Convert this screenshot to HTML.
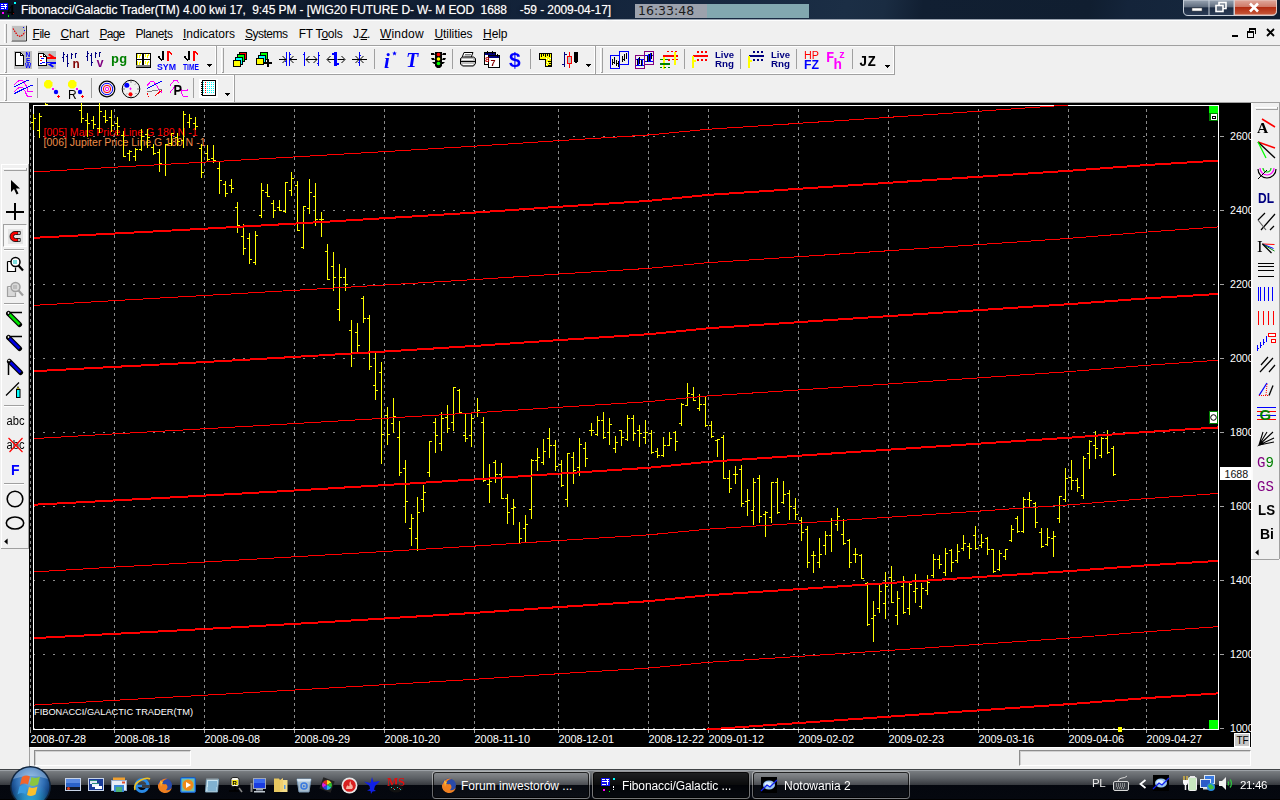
<!DOCTYPE html><html><head><meta charset="utf-8"><title>Fibonacci/Galactic Trader</title><style>
html,body{margin:0;padding:0}
body{width:1280px;height:800px;overflow:hidden;background:#f0f0f0;position:relative;font-family:"Liberation Sans",Arial,sans-serif;font-size:12px;color:#000}
.abs{position:absolute}
svg{position:absolute;overflow:visible}
svg.chart{overflow:hidden}
#title{left:0;top:0;width:1280px;height:19px;background:linear-gradient(100deg,#0b1626 0%,#0e1a2c 18%,#13233a 42%,#172941 58%,#1b2e45 66%,#1a2c42 69%,#111f32 72%,#101e30 85%,#14243a 88%,#15263c 93%,#101d30 100%)}
#titleedge{left:0;top:19px;width:1280px;height:1px;background:#9aa3b0}
#titleedge2{left:0;top:20px;width:1280px;height:1px;background:#fdfdfd}
#ttext{left:21px;top:3px;color:#fff;font-size:12px;letter-spacing:-0.094px;white-space:pre;line-height:15px;text-shadow:0 0 1px rgba(255,255,255,.55),0 0 4px rgba(0,0,0,.9)}
#menubar{left:0;top:21px;width:1280px;height:24px;background:#f0f0f0}
.mi{position:absolute;top:27px;font-size:12px;line-height:15px;white-space:pre}
.mi u{text-decoration:underline}
.hl{position:absolute;height:1px;left:0;width:1280px}
.tbend{position:absolute;width:1px}
.sep{position:absolute;width:1px;background:#a0a0a0}
.grip{position:absolute;width:1px;background:#a0a0a0;border-right:1px solid #fff}
.ic{position:absolute;will-change:transform}
#task{left:0;top:769px;width:1280px;height:31px;background:linear-gradient(180deg,#404346 0,#404346 1px,#9ca1a6 1px,#9ca1a6 2px,#7c8084 2px,#74787c 3px,#5c6065 9px,#36393e 16px,#04070e 16px,#05080f 30px,#000 30px)}
.tbtn{position:absolute;top:771px;height:28px;border:1px solid rgba(255,255,255,.38);border-radius:4px;box-sizing:border-box;box-shadow:inset 0 0 0 1px rgba(0,0,0,.75);background:linear-gradient(180deg,rgba(255,255,255,.16) 0,rgba(255,255,255,.10) 13px,rgba(255,255,255,.02) 13px,rgba(255,255,255,.03) 28px)}
.tbtn.act{background:linear-gradient(180deg,rgba(0,0,0,.72) 0,rgba(0,0,0,.8) 13px,rgba(0,0,0,.5) 13px,rgba(10,12,18,.5) 28px);border-color:rgba(255,255,255,.45)}
.tt{position:absolute;color:#fff;font-size:12px;line-height:15px;white-space:pre;top:779px}
.sunk{position:absolute;box-sizing:border-box;border:1px solid;border-color:#8c8c8c #fff #fff #8c8c8c;background:#f0f0f0;box-shadow:inset 1px 1px 0 #d0d0d0}
</style></head><body>
<div id="title" class="abs"></div><div id="titleedge" class="abs"></div><div id="titleedge2" class="abs"></div>
<div class="abs" style="left:635px;top:4px;width:72px;height:14px;background:#9ca2ad"></div>
<div class="abs" style="left:707px;top:4px;width:102px;height:14px;background:#82a8b0"></div>
<div class="abs" style="left:638px;top:3px;font-family:'DejaVu Sans',sans-serif;font-size:12.5px;line-height:15px;color:#1c1c1c">16:33:48</div>
<div id="ttext" class="abs">Fibonacci/Galactic Trader(TM) 4.00 kwi 17,  9:45 PM - [WIG20 FUTURE D- W- M EOD  1688    -59 - 2009-04-17]</div>
<div id="menubar" class="abs"></div>
<div class="mi" style="left:32.5px;letter-spacing:-0.460px"><u>F</u>ile</div>
<div class="mi" style="left:60.5px;letter-spacing:-0.218px"><u>C</u>hart</div>
<div class="mi" style="left:99.5px;letter-spacing:-0.758px"><u>P</u>age</div>
<div class="mi" style="left:135.5px;letter-spacing:-0.433px">Plane<u>t</u>s</div>
<div class="mi" style="left:183px;letter-spacing:-0.003px"><u>I</u>ndicators</div>
<div class="mi" style="left:245px;letter-spacing:-0.503px"><u>S</u>ystems</div>
<div class="mi" style="left:298.75px;letter-spacing:-0.229px">FT T<u>o</u>ols</div>
<div class="mi" style="left:353px;letter-spacing:-0.875px">J.<u>Z</u>.</div>
<div class="mi" style="left:380px;letter-spacing:0.177px"><u>W</u>indow</div>
<div class="mi" style="left:434.5px;letter-spacing:-0.074px"><u>U</u>tilities</div>
<div class="mi" style="left:483px;letter-spacing:-0.048px"><u>H</u>elp</div>
<div class="hl" style="top:45px;background:#a0a0a0"></div><div class="hl" style="top:46px;background:#fff;width:894px"></div>
<div class="hl" style="top:73px;background:#fff;width:894px"></div><div class="hl" style="top:74px;background:#a0a0a0;width:895px"></div><div class="hl" style="top:75px;background:#fff;width:234px"></div>
<div class="hl" style="top:101px;background:#fff;width:234px"></div><div class="hl" style="top:102px;background:#a0a0a0"></div>
<svg class="chart" width="1222" height="644" viewBox="29 103 1222 644" style="left:29px;top:103px">
<rect x="29" y="103" width="1222" height="644" fill="#000"/>
<g shape-rendering="crispEdges">
<line x1="33" x2="1218" y1="136.5" y2="136.5" stroke="#8a8a8a" stroke-width="1" stroke-dasharray="2 8"/>
<rect x="1220" y="136" width="4" height="1" fill="#a0a0a0"/>
<line x1="33" x2="1218" y1="210.5" y2="210.5" stroke="#8a8a8a" stroke-width="1" stroke-dasharray="2 8"/>
<rect x="1220" y="210" width="4" height="1" fill="#a0a0a0"/>
<line x1="33" x2="1218" y1="284.5" y2="284.5" stroke="#8a8a8a" stroke-width="1" stroke-dasharray="2 8"/>
<rect x="1220" y="284" width="4" height="1" fill="#a0a0a0"/>
<line x1="33" x2="1218" y1="358.5" y2="358.5" stroke="#8a8a8a" stroke-width="1" stroke-dasharray="2 8"/>
<rect x="1220" y="358" width="4" height="1" fill="#a0a0a0"/>
<line x1="33" x2="1218" y1="432.5" y2="432.5" stroke="#8a8a8a" stroke-width="1" stroke-dasharray="2 8"/>
<rect x="1220" y="432" width="4" height="1" fill="#a0a0a0"/>
<line x1="33" x2="1218" y1="506.5" y2="506.5" stroke="#8a8a8a" stroke-width="1" stroke-dasharray="2 8"/>
<rect x="1220" y="506" width="4" height="1" fill="#a0a0a0"/>
<line x1="33" x2="1218" y1="580.5" y2="580.5" stroke="#8a8a8a" stroke-width="1" stroke-dasharray="2 8"/>
<rect x="1220" y="580" width="4" height="1" fill="#a0a0a0"/>
<line x1="33" x2="1218" y1="654.5" y2="654.5" stroke="#8a8a8a" stroke-width="1" stroke-dasharray="2 8"/>
<rect x="1220" y="654" width="4" height="1" fill="#a0a0a0"/>
<rect x="1220" y="728" width="4" height="1" fill="#a0a0a0"/>
<line x1="33" x2="1218" y1="728.5" y2="728.5" stroke="#8a8a8a" stroke-width="1" stroke-dasharray="2 8"/>
<line x1="30.5" x2="30.5" y1="109" y2="730" stroke="#8a8a8a" stroke-width="1" stroke-dasharray="3 3"/>
<rect x="30" y="730" width="1" height="3" fill="#a0a0a0"/>
<line x1="114.5" x2="114.5" y1="109" y2="730" stroke="#8a8a8a" stroke-width="1" stroke-dasharray="3 3"/>
<rect x="114" y="730" width="1" height="3" fill="#a0a0a0"/>
<line x1="204.5" x2="204.5" y1="109" y2="730" stroke="#8a8a8a" stroke-width="1" stroke-dasharray="3 3"/>
<rect x="204" y="730" width="1" height="3" fill="#a0a0a0"/>
<line x1="294.5" x2="294.5" y1="109" y2="730" stroke="#8a8a8a" stroke-width="1" stroke-dasharray="3 3"/>
<rect x="294" y="730" width="1" height="3" fill="#a0a0a0"/>
<line x1="384.5" x2="384.5" y1="109" y2="730" stroke="#8a8a8a" stroke-width="1" stroke-dasharray="3 3"/>
<rect x="384" y="730" width="1" height="3" fill="#a0a0a0"/>
<line x1="474.5" x2="474.5" y1="109" y2="730" stroke="#8a8a8a" stroke-width="1" stroke-dasharray="3 3"/>
<rect x="474" y="730" width="1" height="3" fill="#a0a0a0"/>
<line x1="558.5" x2="558.5" y1="109" y2="730" stroke="#8a8a8a" stroke-width="1" stroke-dasharray="3 3"/>
<rect x="558" y="730" width="1" height="3" fill="#a0a0a0"/>
<line x1="648.5" x2="648.5" y1="109" y2="730" stroke="#8a8a8a" stroke-width="1" stroke-dasharray="3 3"/>
<rect x="648" y="730" width="1" height="3" fill="#a0a0a0"/>
<line x1="708.5" x2="708.5" y1="109" y2="730" stroke="#8a8a8a" stroke-width="1" stroke-dasharray="3 3"/>
<rect x="708" y="730" width="1" height="3" fill="#a0a0a0"/>
<line x1="798.5" x2="798.5" y1="109" y2="730" stroke="#8a8a8a" stroke-width="1" stroke-dasharray="3 3"/>
<rect x="798" y="730" width="1" height="3" fill="#a0a0a0"/>
<line x1="888.5" x2="888.5" y1="109" y2="730" stroke="#8a8a8a" stroke-width="1" stroke-dasharray="3 3"/>
<rect x="888" y="730" width="1" height="3" fill="#a0a0a0"/>
<line x1="978.5" x2="978.5" y1="109" y2="730" stroke="#8a8a8a" stroke-width="1" stroke-dasharray="3 3"/>
<rect x="978" y="730" width="1" height="3" fill="#a0a0a0"/>
<line x1="1068.5" x2="1068.5" y1="109" y2="730" stroke="#8a8a8a" stroke-width="1" stroke-dasharray="3 3"/>
<rect x="1068" y="730" width="1" height="3" fill="#a0a0a0"/>
<line x1="1146.5" x2="1146.5" y1="109" y2="730" stroke="#8a8a8a" stroke-width="1" stroke-dasharray="3 3"/>
<rect x="1146" y="730" width="1" height="3" fill="#a0a0a0"/>
</g>
<g font-family="Liberation Sans, Arial, sans-serif" font-size="11px">
<text x="43.5" y="135.5" fill="#ff0000" textLength="154" lengthAdjust="spacingAndGlyphs">[005] Mars Price Line G 180 N -1</text>
<text x="43.5" y="146" fill="#ee8c48" textLength="162" lengthAdjust="spacingAndGlyphs">[006] Jupiter Price Line G 180 N -1</text>
</g>
<g shape-rendering="crispEdges">
<rect x="33.5" y="105.5" width="1185" height="624" fill="none" stroke="#fff" stroke-width="1"/>
<g fill="#ffff00">
<rect x="33" y="114" width="1" height="16"/>
<rect x="31" y="122" width="2" height="1"/>
<rect x="34" y="118" width="2" height="1"/>
<rect x="39" y="113" width="1" height="25"/>
<rect x="37" y="130" width="2" height="1"/>
<rect x="40" y="116" width="2" height="1"/>
<rect x="45" y="103" width="1" height="2"/>
<rect x="46" y="104" width="2" height="1"/>
<rect x="81" y="103" width="1" height="20"/>
<rect x="79" y="110" width="2" height="1"/>
<rect x="82" y="118" width="2" height="1"/>
<rect x="87" y="113" width="1" height="24"/>
<rect x="85" y="120" width="2" height="1"/>
<rect x="88" y="123" width="2" height="1"/>
<rect x="93" y="116" width="1" height="13"/>
<rect x="91" y="120" width="2" height="1"/>
<rect x="94" y="124" width="2" height="1"/>
<rect x="99" y="103" width="1" height="30"/>
<rect x="97" y="128" width="2" height="1"/>
<rect x="100" y="111" width="2" height="1"/>
<rect x="105" y="110" width="1" height="13"/>
<rect x="103" y="116" width="2" height="1"/>
<rect x="106" y="120" width="2" height="1"/>
<rect x="111" y="110" width="1" height="22"/>
<rect x="109" y="117" width="2" height="1"/>
<rect x="112" y="125" width="2" height="1"/>
<rect x="117" y="117" width="1" height="18"/>
<rect x="115" y="123" width="2" height="1"/>
<rect x="118" y="126" width="2" height="1"/>
<rect x="123" y="131" width="1" height="26"/>
<rect x="121" y="135" width="2" height="1"/>
<rect x="124" y="156" width="2" height="1"/>
<rect x="129" y="150" width="1" height="11"/>
<rect x="127" y="153" width="2" height="1"/>
<rect x="130" y="151" width="2" height="1"/>
<rect x="135" y="148" width="1" height="13"/>
<rect x="133" y="156" width="2" height="1"/>
<rect x="136" y="149" width="2" height="1"/>
<rect x="141" y="129" width="1" height="22"/>
<rect x="139" y="149" width="2" height="1"/>
<rect x="142" y="136" width="2" height="1"/>
<rect x="147" y="129" width="1" height="19"/>
<rect x="145" y="134" width="2" height="1"/>
<rect x="148" y="137" width="2" height="1"/>
<rect x="153" y="144" width="1" height="11"/>
<rect x="151" y="147" width="2" height="1"/>
<rect x="154" y="153" width="2" height="1"/>
<rect x="159" y="149" width="1" height="23"/>
<rect x="157" y="152" width="2" height="1"/>
<rect x="160" y="163" width="2" height="1"/>
<rect x="165" y="144" width="1" height="32"/>
<rect x="163" y="164" width="2" height="1"/>
<rect x="166" y="144" width="2" height="1"/>
<rect x="171" y="133" width="1" height="13"/>
<rect x="169" y="143" width="2" height="1"/>
<rect x="172" y="133" width="2" height="1"/>
<rect x="177" y="133" width="1" height="13"/>
<rect x="175" y="137" width="2" height="1"/>
<rect x="178" y="141" width="2" height="1"/>
<rect x="183" y="111" width="1" height="37"/>
<rect x="181" y="140" width="2" height="1"/>
<rect x="184" y="114" width="2" height="1"/>
<rect x="189" y="114" width="1" height="14"/>
<rect x="187" y="122" width="2" height="1"/>
<rect x="190" y="118" width="2" height="1"/>
<rect x="195" y="117" width="1" height="13"/>
<rect x="193" y="123" width="2" height="1"/>
<rect x="196" y="126" width="2" height="1"/>
<rect x="201" y="144" width="1" height="34"/>
<rect x="199" y="148" width="2" height="1"/>
<rect x="202" y="172" width="2" height="1"/>
<rect x="207" y="145" width="1" height="16"/>
<rect x="205" y="153" width="2" height="1"/>
<rect x="208" y="159" width="2" height="1"/>
<rect x="213" y="145" width="1" height="18"/>
<rect x="211" y="158" width="2" height="1"/>
<rect x="214" y="160" width="2" height="1"/>
<rect x="219" y="162" width="1" height="32"/>
<rect x="217" y="168" width="2" height="1"/>
<rect x="220" y="180" width="2" height="1"/>
<rect x="225" y="181" width="1" height="16"/>
<rect x="223" y="184" width="2" height="1"/>
<rect x="226" y="193" width="2" height="1"/>
<rect x="231" y="179" width="1" height="14"/>
<rect x="229" y="185" width="2" height="1"/>
<rect x="232" y="188" width="2" height="1"/>
<rect x="237" y="202" width="1" height="31"/>
<rect x="235" y="207" width="2" height="1"/>
<rect x="238" y="225" width="2" height="1"/>
<rect x="243" y="224" width="1" height="31"/>
<rect x="241" y="236" width="2" height="1"/>
<rect x="244" y="248" width="2" height="1"/>
<rect x="249" y="233" width="1" height="31"/>
<rect x="247" y="238" width="2" height="1"/>
<rect x="250" y="259" width="2" height="1"/>
<rect x="255" y="231" width="1" height="34"/>
<rect x="253" y="262" width="2" height="1"/>
<rect x="256" y="235" width="2" height="1"/>
<rect x="261" y="183" width="1" height="35"/>
<rect x="259" y="215" width="2" height="1"/>
<rect x="262" y="190" width="2" height="1"/>
<rect x="267" y="184" width="1" height="13"/>
<rect x="265" y="192" width="2" height="1"/>
<rect x="268" y="196" width="2" height="1"/>
<rect x="273" y="200" width="1" height="18"/>
<rect x="271" y="203" width="2" height="1"/>
<rect x="274" y="210" width="2" height="1"/>
<rect x="279" y="200" width="1" height="11"/>
<rect x="277" y="207" width="2" height="1"/>
<rect x="280" y="210" width="2" height="1"/>
<rect x="285" y="182" width="1" height="31"/>
<rect x="283" y="211" width="2" height="1"/>
<rect x="286" y="182" width="2" height="1"/>
<rect x="291" y="172" width="1" height="24"/>
<rect x="289" y="190" width="2" height="1"/>
<rect x="292" y="178" width="2" height="1"/>
<rect x="297" y="181" width="1" height="50"/>
<rect x="295" y="185" width="2" height="1"/>
<rect x="298" y="230" width="2" height="1"/>
<rect x="303" y="206" width="1" height="43"/>
<rect x="301" y="247" width="2" height="1"/>
<rect x="304" y="206" width="2" height="1"/>
<rect x="309" y="179" width="1" height="35"/>
<rect x="307" y="208" width="2" height="1"/>
<rect x="310" y="192" width="2" height="1"/>
<rect x="315" y="183" width="1" height="43"/>
<rect x="313" y="196" width="2" height="1"/>
<rect x="316" y="219" width="2" height="1"/>
<rect x="321" y="212" width="1" height="25"/>
<rect x="319" y="219" width="2" height="1"/>
<rect x="322" y="219" width="2" height="1"/>
<rect x="327" y="244" width="1" height="36"/>
<rect x="325" y="251" width="2" height="1"/>
<rect x="328" y="279" width="2" height="1"/>
<rect x="333" y="252" width="1" height="39"/>
<rect x="331" y="266" width="2" height="1"/>
<rect x="334" y="277" width="2" height="1"/>
<rect x="339" y="264" width="1" height="57"/>
<rect x="337" y="309" width="2" height="1"/>
<rect x="340" y="277" width="2" height="1"/>
<rect x="345" y="268" width="1" height="23"/>
<rect x="343" y="277" width="2" height="1"/>
<rect x="346" y="284" width="2" height="1"/>
<rect x="351" y="320" width="1" height="47"/>
<rect x="349" y="330" width="2" height="1"/>
<rect x="352" y="352" width="2" height="1"/>
<rect x="357" y="323" width="1" height="29"/>
<rect x="355" y="332" width="2" height="1"/>
<rect x="358" y="345" width="2" height="1"/>
<rect x="363" y="296" width="1" height="27"/>
<rect x="361" y="298" width="2" height="1"/>
<rect x="364" y="318" width="2" height="1"/>
<rect x="369" y="315" width="1" height="55"/>
<rect x="367" y="318" width="2" height="1"/>
<rect x="370" y="366" width="2" height="1"/>
<rect x="375" y="353" width="1" height="47"/>
<rect x="373" y="385" width="2" height="1"/>
<rect x="376" y="390" width="2" height="1"/>
<rect x="381" y="362" width="1" height="102"/>
<rect x="379" y="372" width="2" height="1"/>
<rect x="382" y="434" width="2" height="1"/>
<rect x="387" y="407" width="1" height="38"/>
<rect x="385" y="415" width="2" height="1"/>
<rect x="388" y="434" width="2" height="1"/>
<rect x="393" y="398" width="1" height="35"/>
<rect x="391" y="423" width="2" height="1"/>
<rect x="394" y="416" width="2" height="1"/>
<rect x="399" y="421" width="1" height="55"/>
<rect x="397" y="437" width="2" height="1"/>
<rect x="400" y="472" width="2" height="1"/>
<rect x="405" y="460" width="1" height="63"/>
<rect x="403" y="468" width="2" height="1"/>
<rect x="406" y="501" width="2" height="1"/>
<rect x="411" y="514" width="1" height="32"/>
<rect x="409" y="528" width="2" height="1"/>
<rect x="412" y="518" width="2" height="1"/>
<rect x="417" y="497" width="1" height="54"/>
<rect x="415" y="538" width="2" height="1"/>
<rect x="418" y="512" width="2" height="1"/>
<rect x="423" y="485" width="1" height="27"/>
<rect x="421" y="499" width="2" height="1"/>
<rect x="424" y="492" width="2" height="1"/>
<rect x="429" y="441" width="1" height="36"/>
<rect x="427" y="472" width="2" height="1"/>
<rect x="430" y="441" width="2" height="1"/>
<rect x="435" y="418" width="1" height="35"/>
<rect x="433" y="422" width="2" height="1"/>
<rect x="436" y="435" width="2" height="1"/>
<rect x="441" y="412" width="1" height="39"/>
<rect x="439" y="443" width="2" height="1"/>
<rect x="442" y="418" width="2" height="1"/>
<rect x="447" y="405" width="1" height="28"/>
<rect x="445" y="417" width="2" height="1"/>
<rect x="448" y="428" width="2" height="1"/>
<rect x="453" y="387" width="1" height="44"/>
<rect x="451" y="422" width="2" height="1"/>
<rect x="454" y="387" width="2" height="1"/>
<rect x="459" y="389" width="1" height="24"/>
<rect x="457" y="390" width="2" height="1"/>
<rect x="460" y="412" width="2" height="1"/>
<rect x="465" y="414" width="1" height="28"/>
<rect x="463" y="435" width="2" height="1"/>
<rect x="466" y="438" width="2" height="1"/>
<rect x="471" y="413" width="1" height="34"/>
<rect x="469" y="435" width="2" height="1"/>
<rect x="472" y="418" width="2" height="1"/>
<rect x="477" y="398" width="1" height="19"/>
<rect x="475" y="412" width="2" height="1"/>
<rect x="478" y="410" width="2" height="1"/>
<rect x="483" y="417" width="1" height="65"/>
<rect x="481" y="422" width="2" height="1"/>
<rect x="484" y="480" width="2" height="1"/>
<rect x="489" y="464" width="1" height="39"/>
<rect x="487" y="484" width="2" height="1"/>
<rect x="490" y="481" width="2" height="1"/>
<rect x="495" y="460" width="1" height="23"/>
<rect x="493" y="462" width="2" height="1"/>
<rect x="496" y="474" width="2" height="1"/>
<rect x="501" y="463" width="1" height="36"/>
<rect x="499" y="474" width="2" height="1"/>
<rect x="502" y="498" width="2" height="1"/>
<rect x="507" y="494" width="1" height="30"/>
<rect x="505" y="498" width="2" height="1"/>
<rect x="508" y="512" width="2" height="1"/>
<rect x="513" y="499" width="1" height="26"/>
<rect x="511" y="508" width="2" height="1"/>
<rect x="514" y="507" width="2" height="1"/>
<rect x="519" y="522" width="1" height="22"/>
<rect x="517" y="543" width="2" height="1"/>
<rect x="520" y="538" width="2" height="1"/>
<rect x="525" y="515" width="1" height="27"/>
<rect x="523" y="528" width="2" height="1"/>
<rect x="526" y="524" width="2" height="1"/>
<rect x="531" y="459" width="1" height="60"/>
<rect x="529" y="509" width="2" height="1"/>
<rect x="532" y="460" width="2" height="1"/>
<rect x="537" y="448" width="1" height="23"/>
<rect x="535" y="460" width="2" height="1"/>
<rect x="538" y="457" width="2" height="1"/>
<rect x="543" y="439" width="1" height="26"/>
<rect x="541" y="462" width="2" height="1"/>
<rect x="544" y="451" width="2" height="1"/>
<rect x="549" y="428" width="1" height="30"/>
<rect x="547" y="438" width="2" height="1"/>
<rect x="550" y="445" width="2" height="1"/>
<rect x="555" y="440" width="1" height="31"/>
<rect x="553" y="445" width="2" height="1"/>
<rect x="556" y="466" width="2" height="1"/>
<rect x="561" y="460" width="1" height="27"/>
<rect x="559" y="464" width="2" height="1"/>
<rect x="562" y="485" width="2" height="1"/>
<rect x="567" y="453" width="1" height="54"/>
<rect x="565" y="499" width="2" height="1"/>
<rect x="568" y="453" width="2" height="1"/>
<rect x="573" y="452" width="1" height="32"/>
<rect x="571" y="457" width="2" height="1"/>
<rect x="574" y="470" width="2" height="1"/>
<rect x="579" y="438" width="1" height="38"/>
<rect x="577" y="467" width="2" height="1"/>
<rect x="580" y="444" width="2" height="1"/>
<rect x="585" y="442" width="1" height="25"/>
<rect x="583" y="448" width="2" height="1"/>
<rect x="586" y="458" width="2" height="1"/>
<rect x="591" y="423" width="1" height="13"/>
<rect x="589" y="430" width="2" height="1"/>
<rect x="592" y="430" width="2" height="1"/>
<rect x="597" y="416" width="1" height="20"/>
<rect x="595" y="434" width="2" height="1"/>
<rect x="598" y="420" width="2" height="1"/>
<rect x="603" y="412" width="1" height="27"/>
<rect x="601" y="420" width="2" height="1"/>
<rect x="604" y="437" width="2" height="1"/>
<rect x="609" y="418" width="1" height="27"/>
<rect x="607" y="432" width="2" height="1"/>
<rect x="610" y="424" width="2" height="1"/>
<rect x="615" y="436" width="1" height="17"/>
<rect x="613" y="448" width="2" height="1"/>
<rect x="616" y="442" width="2" height="1"/>
<rect x="621" y="430" width="1" height="16"/>
<rect x="619" y="430" width="2" height="1"/>
<rect x="622" y="437" width="2" height="1"/>
<rect x="627" y="415" width="1" height="26"/>
<rect x="625" y="439" width="2" height="1"/>
<rect x="628" y="418" width="2" height="1"/>
<rect x="633" y="415" width="1" height="26"/>
<rect x="631" y="418" width="2" height="1"/>
<rect x="634" y="433" width="2" height="1"/>
<rect x="639" y="425" width="1" height="22"/>
<rect x="637" y="430" width="2" height="1"/>
<rect x="640" y="433" width="2" height="1"/>
<rect x="645" y="420" width="1" height="24"/>
<rect x="643" y="437" width="2" height="1"/>
<rect x="646" y="432" width="2" height="1"/>
<rect x="651" y="430" width="1" height="24"/>
<rect x="649" y="433" width="2" height="1"/>
<rect x="652" y="452" width="2" height="1"/>
<rect x="657" y="448" width="1" height="10"/>
<rect x="655" y="451" width="2" height="1"/>
<rect x="658" y="455" width="2" height="1"/>
<rect x="663" y="437" width="1" height="20"/>
<rect x="661" y="455" width="2" height="1"/>
<rect x="664" y="445" width="2" height="1"/>
<rect x="669" y="432" width="1" height="14"/>
<rect x="667" y="445" width="2" height="1"/>
<rect x="670" y="438" width="2" height="1"/>
<rect x="675" y="431" width="1" height="20"/>
<rect x="673" y="432" width="2" height="1"/>
<rect x="676" y="441" width="2" height="1"/>
<rect x="681" y="403" width="1" height="23"/>
<rect x="679" y="423" width="2" height="1"/>
<rect x="682" y="404" width="2" height="1"/>
<rect x="687" y="383" width="1" height="23"/>
<rect x="685" y="405" width="2" height="1"/>
<rect x="688" y="393" width="2" height="1"/>
<rect x="693" y="387" width="1" height="14"/>
<rect x="691" y="394" width="2" height="1"/>
<rect x="694" y="400" width="2" height="1"/>
<rect x="699" y="394" width="1" height="17"/>
<rect x="697" y="408" width="2" height="1"/>
<rect x="700" y="404" width="2" height="1"/>
<rect x="705" y="397" width="1" height="30"/>
<rect x="703" y="404" width="2" height="1"/>
<rect x="706" y="425" width="2" height="1"/>
<rect x="711" y="421" width="1" height="17"/>
<rect x="709" y="425" width="2" height="1"/>
<rect x="712" y="436" width="2" height="1"/>
<rect x="717" y="439" width="1" height="18"/>
<rect x="715" y="440" width="2" height="1"/>
<rect x="718" y="439" width="2" height="1"/>
<rect x="723" y="435" width="1" height="44"/>
<rect x="721" y="437" width="2" height="1"/>
<rect x="724" y="478" width="2" height="1"/>
<rect x="729" y="470" width="1" height="23"/>
<rect x="727" y="478" width="2" height="1"/>
<rect x="730" y="488" width="2" height="1"/>
<rect x="735" y="466" width="1" height="18"/>
<rect x="733" y="474" width="2" height="1"/>
<rect x="736" y="474" width="2" height="1"/>
<rect x="741" y="465" width="1" height="42"/>
<rect x="739" y="469" width="2" height="1"/>
<rect x="742" y="503" width="2" height="1"/>
<rect x="747" y="489" width="1" height="27"/>
<rect x="745" y="501" width="2" height="1"/>
<rect x="748" y="500" width="2" height="1"/>
<rect x="753" y="478" width="1" height="47"/>
<rect x="751" y="510" width="2" height="1"/>
<rect x="754" y="482" width="2" height="1"/>
<rect x="759" y="475" width="1" height="48"/>
<rect x="757" y="478" width="2" height="1"/>
<rect x="760" y="516" width="2" height="1"/>
<rect x="765" y="511" width="1" height="26"/>
<rect x="763" y="514" width="2" height="1"/>
<rect x="766" y="512" width="2" height="1"/>
<rect x="771" y="482" width="1" height="41"/>
<rect x="769" y="517" width="2" height="1"/>
<rect x="772" y="482" width="2" height="1"/>
<rect x="777" y="478" width="1" height="36"/>
<rect x="775" y="482" width="2" height="1"/>
<rect x="778" y="512" width="2" height="1"/>
<rect x="783" y="481" width="1" height="23"/>
<rect x="781" y="502" width="2" height="1"/>
<rect x="784" y="494" width="2" height="1"/>
<rect x="789" y="490" width="1" height="30"/>
<rect x="787" y="493" width="2" height="1"/>
<rect x="790" y="506" width="2" height="1"/>
<rect x="795" y="498" width="1" height="22"/>
<rect x="793" y="508" width="2" height="1"/>
<rect x="796" y="514" width="2" height="1"/>
<rect x="801" y="517" width="1" height="24"/>
<rect x="799" y="520" width="2" height="1"/>
<rect x="802" y="532" width="2" height="1"/>
<rect x="807" y="526" width="1" height="42"/>
<rect x="805" y="529" width="2" height="1"/>
<rect x="808" y="562" width="2" height="1"/>
<rect x="813" y="551" width="1" height="22"/>
<rect x="811" y="555" width="2" height="1"/>
<rect x="814" y="555" width="2" height="1"/>
<rect x="819" y="538" width="1" height="30"/>
<rect x="817" y="562" width="2" height="1"/>
<rect x="820" y="554" width="2" height="1"/>
<rect x="825" y="531" width="1" height="24"/>
<rect x="823" y="545" width="2" height="1"/>
<rect x="826" y="535" width="2" height="1"/>
<rect x="831" y="518" width="1" height="34"/>
<rect x="829" y="535" width="2" height="1"/>
<rect x="832" y="520" width="2" height="1"/>
<rect x="837" y="508" width="1" height="23"/>
<rect x="835" y="524" width="2" height="1"/>
<rect x="838" y="516" width="2" height="1"/>
<rect x="843" y="519" width="1" height="26"/>
<rect x="841" y="534" width="2" height="1"/>
<rect x="844" y="543" width="2" height="1"/>
<rect x="849" y="539" width="1" height="29"/>
<rect x="847" y="540" width="2" height="1"/>
<rect x="850" y="562" width="2" height="1"/>
<rect x="855" y="548" width="1" height="15"/>
<rect x="853" y="554" width="2" height="1"/>
<rect x="856" y="554" width="2" height="1"/>
<rect x="861" y="554" width="1" height="25"/>
<rect x="859" y="555" width="2" height="1"/>
<rect x="862" y="578" width="2" height="1"/>
<rect x="867" y="582" width="1" height="44"/>
<rect x="865" y="583" width="2" height="1"/>
<rect x="868" y="624" width="2" height="1"/>
<rect x="873" y="601" width="1" height="41"/>
<rect x="871" y="618" width="2" height="1"/>
<rect x="874" y="615" width="2" height="1"/>
<rect x="879" y="585" width="1" height="28"/>
<rect x="877" y="608" width="2" height="1"/>
<rect x="880" y="591" width="2" height="1"/>
<rect x="885" y="572" width="1" height="47"/>
<rect x="883" y="603" width="2" height="1"/>
<rect x="886" y="586" width="2" height="1"/>
<rect x="891" y="566" width="1" height="37"/>
<rect x="889" y="577" width="2" height="1"/>
<rect x="892" y="602" width="2" height="1"/>
<rect x="897" y="591" width="1" height="34"/>
<rect x="895" y="615" width="2" height="1"/>
<rect x="898" y="598" width="2" height="1"/>
<rect x="903" y="576" width="1" height="38"/>
<rect x="901" y="586" width="2" height="1"/>
<rect x="904" y="612" width="2" height="1"/>
<rect x="909" y="583" width="1" height="32"/>
<rect x="907" y="608" width="2" height="1"/>
<rect x="910" y="584" width="2" height="1"/>
<rect x="915" y="574" width="1" height="29"/>
<rect x="913" y="591" width="2" height="1"/>
<rect x="916" y="588" width="2" height="1"/>
<rect x="921" y="583" width="1" height="26"/>
<rect x="919" y="606" width="2" height="1"/>
<rect x="922" y="588" width="2" height="1"/>
<rect x="927" y="575" width="1" height="20"/>
<rect x="925" y="590" width="2" height="1"/>
<rect x="928" y="582" width="2" height="1"/>
<rect x="933" y="554" width="1" height="24"/>
<rect x="931" y="575" width="2" height="1"/>
<rect x="934" y="559" width="2" height="1"/>
<rect x="939" y="555" width="1" height="14"/>
<rect x="937" y="559" width="2" height="1"/>
<rect x="940" y="564" width="2" height="1"/>
<rect x="945" y="548" width="1" height="28"/>
<rect x="943" y="572" width="2" height="1"/>
<rect x="946" y="553" width="2" height="1"/>
<rect x="951" y="549" width="1" height="23"/>
<rect x="949" y="550" width="2" height="1"/>
<rect x="952" y="562" width="2" height="1"/>
<rect x="957" y="544" width="1" height="19"/>
<rect x="955" y="560" width="2" height="1"/>
<rect x="958" y="551" width="2" height="1"/>
<rect x="963" y="535" width="1" height="16"/>
<rect x="961" y="548" width="2" height="1"/>
<rect x="964" y="543" width="2" height="1"/>
<rect x="969" y="543" width="1" height="16"/>
<rect x="967" y="546" width="2" height="1"/>
<rect x="970" y="548" width="2" height="1"/>
<rect x="975" y="526" width="1" height="24"/>
<rect x="973" y="535" width="2" height="1"/>
<rect x="976" y="548" width="2" height="1"/>
<rect x="981" y="534" width="1" height="14"/>
<rect x="979" y="545" width="2" height="1"/>
<rect x="982" y="542" width="2" height="1"/>
<rect x="987" y="537" width="1" height="18"/>
<rect x="985" y="538" width="2" height="1"/>
<rect x="988" y="549" width="2" height="1"/>
<rect x="993" y="549" width="1" height="24"/>
<rect x="991" y="549" width="2" height="1"/>
<rect x="994" y="571" width="2" height="1"/>
<rect x="999" y="550" width="1" height="21"/>
<rect x="997" y="569" width="2" height="1"/>
<rect x="1000" y="553" width="2" height="1"/>
<rect x="1005" y="549" width="1" height="11"/>
<rect x="1003" y="556" width="2" height="1"/>
<rect x="1006" y="549" width="2" height="1"/>
<rect x="1011" y="525" width="1" height="17"/>
<rect x="1009" y="540" width="2" height="1"/>
<rect x="1012" y="529" width="2" height="1"/>
<rect x="1017" y="516" width="1" height="17"/>
<rect x="1015" y="518" width="2" height="1"/>
<rect x="1018" y="531" width="2" height="1"/>
<rect x="1023" y="497" width="1" height="36"/>
<rect x="1021" y="531" width="2" height="1"/>
<rect x="1024" y="499" width="2" height="1"/>
<rect x="1029" y="492" width="1" height="16"/>
<rect x="1027" y="499" width="2" height="1"/>
<rect x="1030" y="500" width="2" height="1"/>
<rect x="1035" y="502" width="1" height="26"/>
<rect x="1033" y="503" width="2" height="1"/>
<rect x="1036" y="522" width="2" height="1"/>
<rect x="1041" y="528" width="1" height="20"/>
<rect x="1039" y="532" width="2" height="1"/>
<rect x="1042" y="546" width="2" height="1"/>
<rect x="1047" y="528" width="1" height="18"/>
<rect x="1045" y="544" width="2" height="1"/>
<rect x="1048" y="537" width="2" height="1"/>
<rect x="1053" y="531" width="1" height="26"/>
<rect x="1051" y="538" width="2" height="1"/>
<rect x="1054" y="536" width="2" height="1"/>
<rect x="1059" y="496" width="1" height="27"/>
<rect x="1057" y="518" width="2" height="1"/>
<rect x="1060" y="496" width="2" height="1"/>
<rect x="1065" y="468" width="1" height="34"/>
<rect x="1063" y="499" width="2" height="1"/>
<rect x="1066" y="478" width="2" height="1"/>
<rect x="1071" y="460" width="1" height="30"/>
<rect x="1069" y="477" width="2" height="1"/>
<rect x="1072" y="480" width="2" height="1"/>
<rect x="1077" y="478" width="1" height="14"/>
<rect x="1075" y="480" width="2" height="1"/>
<rect x="1078" y="487" width="2" height="1"/>
<rect x="1083" y="456" width="1" height="43"/>
<rect x="1081" y="495" width="2" height="1"/>
<rect x="1084" y="458" width="2" height="1"/>
<rect x="1089" y="440" width="1" height="29"/>
<rect x="1087" y="453" width="2" height="1"/>
<rect x="1090" y="441" width="2" height="1"/>
<rect x="1095" y="431" width="1" height="28"/>
<rect x="1093" y="445" width="2" height="1"/>
<rect x="1096" y="448" width="2" height="1"/>
<rect x="1101" y="437" width="1" height="21"/>
<rect x="1099" y="455" width="2" height="1"/>
<rect x="1102" y="438" width="2" height="1"/>
<rect x="1107" y="430" width="1" height="24"/>
<rect x="1105" y="438" width="2" height="1"/>
<rect x="1108" y="452" width="2" height="1"/>
<rect x="1113" y="446" width="1" height="30"/>
<rect x="1111" y="448" width="2" height="1"/>
<rect x="1114" y="474" width="2" height="1"/>
</g>
</g>
<clipPath id="fc"><rect x="34" y="105" width="1184" height="625"/></clipPath>
<g clip-path="url(#fc)" shape-rendering="crispEdges" stroke="#ff0000">
<polyline points="33,172.03 39,171.67 45,171.32 51,170.97 57,170.62 63,170.26 69,169.91 75,169.55 81,169.20 87,168.84 93,168.48 99,168.13 105,167.77 111,167.41 117,167.06 123,166.73 129,166.39 135,166.06 141,165.72 147,165.38 153,165.04 159,164.70 165,164.36 171,164.02 177,163.68 183,163.34 189,163.00 195,162.66 201,162.32 207,161.98 213,161.63 219,161.29 225,160.94 231,160.60 237,160.25 243,159.91 249,159.56 255,159.22 261,158.87 267,158.52 273,158.17 279,157.82 285,157.47 291,157.12 297,156.77 303,156.42 309,156.07 315,155.72 321,155.37 327,155.01 333,154.66 339,154.31 345,153.95 351,153.60 357,153.24 363,152.89 369,152.53 375,152.17 381,151.82 387,151.46 393,151.10 399,150.74 405,150.38 411,150.02 417,149.66 423,149.30 429,148.94 435,148.58 441,148.21 447,147.85 453,147.49 459,147.12 465,146.76 471,146.39 477,146.02 483,145.62 489,145.23 495,144.84 501,144.44 507,144.05 513,143.65 519,143.26 525,142.86 531,142.46 537,142.07 543,141.67 549,141.27 555,140.87 561,140.49 567,140.11 573,139.74 579,139.36 585,138.99 591,138.61 597,138.24 603,137.86 609,137.48 615,137.11 621,136.73 627,136.35 633,135.97 639,135.59 645,135.21 651,134.73 657,134.16 663,133.59 669,133.01 675,132.44 681,131.86 687,131.28 693,130.70 699,130.12 705,129.54 711,129.06 717,128.67 723,128.28 729,127.89 735,127.50 741,127.11 747,126.72 753,126.33 759,125.93 765,125.54 771,125.15 777,124.75 783,124.36 789,123.97 795,123.57 801,123.17 807,122.78 813,122.38 819,121.98 825,121.59 831,121.19 837,120.79 843,120.39 849,119.99 855,119.59 861,119.19 867,118.79 873,118.39 879,117.98 885,117.58 891,117.18 897,116.77 903,116.37 909,115.96 915,115.56 921,115.15 927,114.75 933,114.34 939,113.93 945,113.52 951,113.12 957,112.71 963,112.30 969,111.89 975,111.48 981,111.07 987,110.65 993,110.24 999,109.83 1005,109.42 1011,109.00 1017,108.59 1023,108.17 1029,107.76 1035,107.34 1041,106.93 1047,106.51 1053,106.09 1059,105.68 1065,105.26 1071,104.81 1077,104.32 1083,103.84 1089,103.36 1095,102.87 1101,102.38 1107,101.90 1113,101.41 1119,100.92 1125,100.43 1131,99.94 1137,99.45 1143,98.96 1149,98.50 1155,98.08 1161,97.65 1167,97.22 1173,96.79 1179,96.36 1185,95.93 1191,95.50 1197,95.07 1203,94.64 1209,94.21 1215,93.78 1221,93.35 1227,92.92" fill="none" stroke-width="1"/>
<polyline points="33,305.42 39,305.06 45,304.71 51,304.36 57,304.01 63,303.65 69,303.30 75,302.94 81,302.59 87,302.23 93,301.87 99,301.52 105,301.16 111,300.80 117,300.45 123,300.12 129,299.78 135,299.45 141,299.11 147,298.77 153,298.43 159,298.09 165,297.75 171,297.41 177,297.07 183,296.73 189,296.39 195,296.05 201,295.71 207,295.37 213,295.02 219,294.68 225,294.33 231,293.99 237,293.64 243,293.30 249,292.95 255,292.61 261,292.26 267,291.91 273,291.56 279,291.21 285,290.86 291,290.51 297,290.16 303,289.81 309,289.46 315,289.11 321,288.76 327,288.40 333,288.05 339,287.70 345,287.34 351,286.99 357,286.63 363,286.28 369,285.92 375,285.56 381,285.21 387,284.85 393,284.49 399,284.13 405,283.77 411,283.41 417,283.05 423,282.69 429,282.33 435,281.97 441,281.60 447,281.24 453,280.88 459,280.51 465,280.15 471,279.78 477,279.41 483,279.01 489,278.62 495,278.23 501,277.83 507,277.44 513,277.04 519,276.65 525,276.25 531,275.85 537,275.46 543,275.06 549,274.66 555,274.26 561,273.88 567,273.50 573,273.13 579,272.75 585,272.38 591,272.00 597,271.63 603,271.25 609,270.87 615,270.50 621,270.12 627,269.74 633,269.36 639,268.98 645,268.60 651,268.12 657,267.55 663,266.98 669,266.40 675,265.83 681,265.25 687,264.67 693,264.09 699,263.51 705,262.93 711,262.45 717,262.06 723,261.67 729,261.28 735,260.89 741,260.50 747,260.11 753,259.72 759,259.32 765,258.93 771,258.54 777,258.14 783,257.75 789,257.36 795,256.96 801,256.56 807,256.17 813,255.77 819,255.37 825,254.98 831,254.58 837,254.18 843,253.78 849,253.38 855,252.98 861,252.58 867,252.18 873,251.78 879,251.37 885,250.97 891,250.57 897,250.16 903,249.76 909,249.35 915,248.95 921,248.54 927,248.14 933,247.73 939,247.32 945,246.91 951,246.51 957,246.10 963,245.69 969,245.28 975,244.87 981,244.46 987,244.04 993,243.63 999,243.22 1005,242.81 1011,242.39 1017,241.98 1023,241.56 1029,241.15 1035,240.73 1041,240.32 1047,239.90 1053,239.48 1059,239.07 1065,238.65 1071,238.20 1077,237.71 1083,237.23 1089,236.75 1095,236.26 1101,235.77 1107,235.29 1113,234.80 1119,234.31 1125,233.82 1131,233.33 1137,232.84 1143,232.35 1149,231.89 1155,231.47 1161,231.04 1167,230.61 1173,230.18 1179,229.75 1185,229.32 1191,228.89 1197,228.46 1203,228.03 1209,227.60 1215,227.17 1221,226.74 1227,226.31" fill="none" stroke-width="1"/>
<polyline points="33,438.68 39,438.32 45,437.97 51,437.62 57,437.27 63,436.91 69,436.56 75,436.20 81,435.85 87,435.49 93,435.13 99,434.78 105,434.42 111,434.06 117,433.71 123,433.38 129,433.04 135,432.71 141,432.37 147,432.03 153,431.69 159,431.35 165,431.01 171,430.67 177,430.33 183,429.99 189,429.65 195,429.31 201,428.97 207,428.63 213,428.28 219,427.94 225,427.59 231,427.25 237,426.90 243,426.56 249,426.21 255,425.87 261,425.52 267,425.17 273,424.82 279,424.47 285,424.12 291,423.77 297,423.42 303,423.07 309,422.72 315,422.37 321,422.02 327,421.66 333,421.31 339,420.96 345,420.60 351,420.25 357,419.89 363,419.54 369,419.18 375,418.82 381,418.47 387,418.11 393,417.75 399,417.39 405,417.03 411,416.67 417,416.31 423,415.95 429,415.59 435,415.23 441,414.86 447,414.50 453,414.14 459,413.77 465,413.41 471,413.04 477,412.67 483,412.27 489,411.88 495,411.49 501,411.09 507,410.70 513,410.30 519,409.91 525,409.51 531,409.11 537,408.72 543,408.32 549,407.92 555,407.52 561,407.14 567,406.76 573,406.39 579,406.01 585,405.64 591,405.26 597,404.89 603,404.51 609,404.13 615,403.76 621,403.38 627,403.00 633,402.62 639,402.24 645,401.86 651,401.38 657,400.81 663,400.24 669,399.66 675,399.09 681,398.51 687,397.93 693,397.35 699,396.77 705,396.19 711,395.71 717,395.32 723,394.93 729,394.54 735,394.15 741,393.76 747,393.37 753,392.98 759,392.58 765,392.19 771,391.80 777,391.40 783,391.01 789,390.62 795,390.22 801,389.82 807,389.43 813,389.03 819,388.63 825,388.24 831,387.84 837,387.44 843,387.04 849,386.64 855,386.24 861,385.84 867,385.44 873,385.04 879,384.63 885,384.23 891,383.83 897,383.42 903,383.02 909,382.61 915,382.21 921,381.80 927,381.40 933,380.99 939,380.58 945,380.17 951,379.77 957,379.36 963,378.95 969,378.54 975,378.13 981,377.72 987,377.30 993,376.89 999,376.48 1005,376.07 1011,375.65 1017,375.24 1023,374.82 1029,374.41 1035,373.99 1041,373.58 1047,373.16 1053,372.74 1059,372.33 1065,371.91 1071,371.46 1077,370.97 1083,370.49 1089,370.01 1095,369.52 1101,369.03 1107,368.55 1113,368.06 1119,367.57 1125,367.08 1131,366.59 1137,366.10 1143,365.61 1149,365.15 1155,364.73 1161,364.30 1167,363.87 1173,363.44 1179,363.01 1185,362.58 1191,362.15 1197,361.72 1203,361.29 1209,360.86 1215,360.43 1221,360.00 1227,359.57" fill="none" stroke-width="1"/>
<polyline points="33,571.93 39,571.57 45,571.22 51,570.87 57,570.52 63,570.16 69,569.81 75,569.45 81,569.10 87,568.74 93,568.38 99,568.03 105,567.67 111,567.31 117,566.96 123,566.63 129,566.29 135,565.96 141,565.62 147,565.28 153,564.94 159,564.60 165,564.26 171,563.92 177,563.58 183,563.24 189,562.90 195,562.56 201,562.22 207,561.88 213,561.53 219,561.19 225,560.84 231,560.50 237,560.15 243,559.81 249,559.46 255,559.12 261,558.77 267,558.42 273,558.07 279,557.72 285,557.37 291,557.02 297,556.67 303,556.32 309,555.97 315,555.62 321,555.27 327,554.91 333,554.56 339,554.21 345,553.85 351,553.50 357,553.14 363,552.79 369,552.43 375,552.07 381,551.72 387,551.36 393,551.00 399,550.64 405,550.28 411,549.92 417,549.56 423,549.20 429,548.84 435,548.48 441,548.11 447,547.75 453,547.39 459,547.02 465,546.66 471,546.29 477,545.92 483,545.52 489,545.13 495,544.74 501,544.34 507,543.95 513,543.55 519,543.16 525,542.76 531,542.36 537,541.97 543,541.57 549,541.17 555,540.77 561,540.39 567,540.01 573,539.64 579,539.26 585,538.89 591,538.51 597,538.14 603,537.76 609,537.38 615,537.01 621,536.63 627,536.25 633,535.87 639,535.49 645,535.11 651,534.63 657,534.06 663,533.49 669,532.91 675,532.34 681,531.76 687,531.18 693,530.60 699,530.02 705,529.44 711,528.96 717,528.57 723,528.18 729,527.79 735,527.40 741,527.01 747,526.62 753,526.23 759,525.83 765,525.44 771,525.05 777,524.65 783,524.26 789,523.87 795,523.47 801,523.07 807,522.68 813,522.28 819,521.88 825,521.49 831,521.09 837,520.69 843,520.29 849,519.89 855,519.49 861,519.09 867,518.69 873,518.29 879,517.88 885,517.48 891,517.08 897,516.67 903,516.27 909,515.86 915,515.46 921,515.05 927,514.65 933,514.24 939,513.83 945,513.42 951,513.02 957,512.61 963,512.20 969,511.79 975,511.38 981,510.97 987,510.55 993,510.14 999,509.73 1005,509.32 1011,508.90 1017,508.49 1023,508.07 1029,507.66 1035,507.24 1041,506.83 1047,506.41 1053,505.99 1059,505.58 1065,505.16 1071,504.71 1077,504.22 1083,503.74 1089,503.26 1095,502.77 1101,502.28 1107,501.80 1113,501.31 1119,500.82 1125,500.33 1131,499.84 1137,499.35 1143,498.86 1149,498.40 1155,497.98 1161,497.55 1167,497.12 1173,496.69 1179,496.26 1185,495.83 1191,495.40 1197,494.97 1203,494.54 1209,494.11 1215,493.68 1221,493.25 1227,492.82" fill="none" stroke-width="1"/>
<polyline points="33,705.13 39,704.77 45,704.42 51,704.07 57,703.72 63,703.36 69,703.01 75,702.65 81,702.30 87,701.94 93,701.58 99,701.23 105,700.87 111,700.51 117,700.16 123,699.83 129,699.49 135,699.16 141,698.82 147,698.48 153,698.14 159,697.80 165,697.46 171,697.12 177,696.78 183,696.44 189,696.10 195,695.76 201,695.42 207,695.08 213,694.73 219,694.39 225,694.04 231,693.70 237,693.35 243,693.01 249,692.66 255,692.32 261,691.97 267,691.62 273,691.27 279,690.92 285,690.57 291,690.22 297,689.87 303,689.52 309,689.17 315,688.82 321,688.47 327,688.11 333,687.76 339,687.41 345,687.05 351,686.70 357,686.34 363,685.99 369,685.63 375,685.27 381,684.92 387,684.56 393,684.20 399,683.84 405,683.48 411,683.12 417,682.76 423,682.40 429,682.04 435,681.68 441,681.31 447,680.95 453,680.59 459,680.22 465,679.86 471,679.49 477,679.12 483,678.72 489,678.33 495,677.94 501,677.54 507,677.15 513,676.75 519,676.36 525,675.96 531,675.56 537,675.17 543,674.77 549,674.37 555,673.97 561,673.59 567,673.21 573,672.84 579,672.46 585,672.09 591,671.71 597,671.34 603,670.96 609,670.58 615,670.21 621,669.83 627,669.45 633,669.07 639,668.69 645,668.31 651,667.83 657,667.26 663,666.69 669,666.11 675,665.54 681,664.96 687,664.38 693,663.80 699,663.22 705,662.64 711,662.16 717,661.77 723,661.38 729,660.99 735,660.60 741,660.21 747,659.82 753,659.43 759,659.03 765,658.64 771,658.25 777,657.85 783,657.46 789,657.07 795,656.67 801,656.27 807,655.88 813,655.48 819,655.08 825,654.69 831,654.29 837,653.89 843,653.49 849,653.09 855,652.69 861,652.29 867,651.89 873,651.49 879,651.08 885,650.68 891,650.28 897,649.87 903,649.47 909,649.06 915,648.66 921,648.25 927,647.85 933,647.44 939,647.03 945,646.62 951,646.22 957,645.81 963,645.40 969,644.99 975,644.58 981,644.17 987,643.75 993,643.34 999,642.93 1005,642.52 1011,642.10 1017,641.69 1023,641.27 1029,640.86 1035,640.44 1041,640.03 1047,639.61 1053,639.19 1059,638.78 1065,638.36 1071,637.91 1077,637.42 1083,636.94 1089,636.46 1095,635.97 1101,635.48 1107,635.00 1113,634.51 1119,634.02 1125,633.53 1131,633.04 1137,632.55 1143,632.06 1149,631.60 1155,631.18 1161,630.75 1167,630.32 1173,629.89 1179,629.46 1185,629.03 1191,628.60 1197,628.17 1203,627.74 1209,627.31 1215,626.88 1221,626.45 1227,626.02" fill="none" stroke-width="1"/>
<polyline points="33,237.86 39,237.56 45,237.25 51,236.93 57,236.62 63,236.30 69,235.99 75,235.67 81,235.35 87,235.02 93,234.70 99,234.37 105,234.04 111,233.71 117,233.39 123,233.08 129,232.77 135,232.45 141,232.14 147,231.82 153,231.50 159,231.18 165,230.86 171,230.53 177,230.21 183,229.88 189,229.55 195,229.22 201,228.89 207,228.56 213,228.23 219,227.89 225,227.56 231,227.22 237,226.88 243,226.54 249,226.20 255,225.86 261,225.51 267,225.17 273,224.82 279,224.48 285,224.13 291,223.78 297,223.43 303,223.07 309,222.72 315,222.37 321,222.01 327,221.66 333,221.30 339,220.94 345,220.58 351,220.22 357,219.86 363,219.49 369,219.13 375,218.76 381,218.40 387,218.03 393,217.66 399,217.29 405,216.92 411,216.55 417,216.18 423,215.81 429,215.44 435,215.06 441,214.69 447,214.31 453,213.93 459,213.56 465,213.18 471,212.80 477,212.41 483,212.00 489,211.59 495,211.18 501,210.77 507,210.36 513,209.94 519,209.53 525,209.12 531,208.70 537,208.29 543,207.87 549,207.45 555,207.04 561,206.63 567,206.24 573,205.85 579,205.46 585,205.07 591,204.67 597,204.28 603,203.88 609,203.49 615,203.09 621,202.70 627,202.30 633,201.91 639,201.51 645,201.11 651,200.62 657,200.02 663,199.42 669,198.82 675,198.22 681,197.62 687,197.02 693,196.42 699,195.82 705,195.21 711,194.71 717,194.31 723,193.91 729,193.50 735,193.10 741,192.70 747,192.29 753,191.89 759,191.49 765,191.08 771,190.68 777,190.28 783,189.87 789,189.47 795,189.07 801,188.66 807,188.26 813,187.85 819,187.45 825,187.05 831,186.64 837,186.24 843,185.84 849,185.43 855,185.03 861,184.63 867,184.22 873,183.82 879,183.42 885,183.02 891,182.61 897,182.21 903,181.81 909,181.41 915,181.01 921,180.61 927,180.20 933,179.80 939,179.40 945,179.00 951,178.60 957,178.20 963,177.80 969,177.41 975,177.01 981,176.61 987,176.21 993,175.81 999,175.42 1005,175.02 1011,174.62 1017,174.23 1023,173.83 1029,173.44 1035,173.04 1041,172.65 1047,172.26 1053,171.86 1059,171.47 1065,171.08 1071,170.66 1077,170.21 1083,169.76 1089,169.31 1095,168.86 1101,168.42 1107,167.97 1113,167.52 1119,167.08 1125,166.64 1131,166.19 1137,165.75 1143,165.31 1149,164.90 1155,164.52 1161,164.14 1167,163.76 1173,163.39 1179,163.01 1185,162.63 1191,162.26 1197,161.88 1203,161.51 1209,161.14 1215,160.76 1221,160.39 1227,160.02" fill="none" stroke-width="2"/>
<polyline points="33,371.21 39,370.91 45,370.60 51,370.28 57,369.97 63,369.65 69,369.34 75,369.02 81,368.70 87,368.37 93,368.05 99,367.72 105,367.39 111,367.06 117,366.74 123,366.43 129,366.12 135,365.80 141,365.49 147,365.17 153,364.85 159,364.53 165,364.21 171,363.88 177,363.56 183,363.23 189,362.90 195,362.57 201,362.24 207,361.91 213,361.58 219,361.24 225,360.91 231,360.57 237,360.23 243,359.89 249,359.55 255,359.21 261,358.86 267,358.52 273,358.17 279,357.83 285,357.48 291,357.13 297,356.78 303,356.42 309,356.07 315,355.72 321,355.36 327,355.01 333,354.65 339,354.29 345,353.93 351,353.57 357,353.21 363,352.84 369,352.48 375,352.11 381,351.75 387,351.38 393,351.01 399,350.64 405,350.27 411,349.90 417,349.53 423,349.16 429,348.79 435,348.41 441,348.04 447,347.66 453,347.28 459,346.91 465,346.53 471,346.15 477,345.76 483,345.35 489,344.94 495,344.53 501,344.12 507,343.71 513,343.29 519,342.88 525,342.47 531,342.05 537,341.64 543,341.22 549,340.80 555,340.39 561,339.98 567,339.59 573,339.20 579,338.81 585,338.42 591,338.02 597,337.63 603,337.23 609,336.84 615,336.44 621,336.05 627,335.65 633,335.26 639,334.86 645,334.46 651,333.97 657,333.37 663,332.77 669,332.17 675,331.57 681,330.97 687,330.37 693,329.77 699,329.17 705,328.56 711,328.06 717,327.66 723,327.26 729,326.85 735,326.45 741,326.05 747,325.64 753,325.24 759,324.84 765,324.43 771,324.03 777,323.63 783,323.22 789,322.82 795,322.42 801,322.01 807,321.61 813,321.20 819,320.80 825,320.40 831,319.99 837,319.59 843,319.19 849,318.78 855,318.38 861,317.98 867,317.57 873,317.17 879,316.77 885,316.37 891,315.96 897,315.56 903,315.16 909,314.76 915,314.36 921,313.96 927,313.55 933,313.15 939,312.75 945,312.35 951,311.95 957,311.55 963,311.15 969,310.76 975,310.36 981,309.96 987,309.56 993,309.16 999,308.77 1005,308.37 1011,307.97 1017,307.58 1023,307.18 1029,306.79 1035,306.39 1041,306.00 1047,305.61 1053,305.21 1059,304.82 1065,304.43 1071,304.01 1077,303.56 1083,303.11 1089,302.66 1095,302.21 1101,301.77 1107,301.32 1113,300.87 1119,300.43 1125,299.99 1131,299.54 1137,299.10 1143,298.66 1149,298.25 1155,297.87 1161,297.49 1167,297.11 1173,296.74 1179,296.36 1185,295.98 1191,295.61 1197,295.23 1203,294.86 1209,294.49 1215,294.11 1221,293.74 1227,293.37" fill="none" stroke-width="2"/>
<polyline points="33,504.76 39,504.46 45,504.15 51,503.83 57,503.52 63,503.20 69,502.89 75,502.57 81,502.25 87,501.92 93,501.60 99,501.27 105,500.94 111,500.61 117,500.29 123,499.98 129,499.67 135,499.35 141,499.04 147,498.72 153,498.40 159,498.08 165,497.76 171,497.43 177,497.11 183,496.78 189,496.45 195,496.12 201,495.79 207,495.46 213,495.13 219,494.79 225,494.46 231,494.12 237,493.78 243,493.44 249,493.10 255,492.76 261,492.41 267,492.07 273,491.72 279,491.38 285,491.03 291,490.68 297,490.33 303,489.97 309,489.62 315,489.27 321,488.91 327,488.56 333,488.20 339,487.84 345,487.48 351,487.12 357,486.76 363,486.39 369,486.03 375,485.66 381,485.30 387,484.93 393,484.56 399,484.19 405,483.82 411,483.45 417,483.08 423,482.71 429,482.34 435,481.96 441,481.59 447,481.21 453,480.83 459,480.46 465,480.08 471,479.70 477,479.31 483,478.90 489,478.49 495,478.08 501,477.67 507,477.26 513,476.84 519,476.43 525,476.02 531,475.60 537,475.19 543,474.77 549,474.35 555,473.94 561,473.53 567,473.14 573,472.75 579,472.36 585,471.97 591,471.57 597,471.18 603,470.78 609,470.39 615,469.99 621,469.60 627,469.20 633,468.81 639,468.41 645,468.01 651,467.52 657,466.92 663,466.32 669,465.72 675,465.12 681,464.52 687,463.92 693,463.32 699,462.72 705,462.11 711,461.61 717,461.21 723,460.81 729,460.40 735,460.00 741,459.60 747,459.19 753,458.79 759,458.39 765,457.98 771,457.58 777,457.18 783,456.77 789,456.37 795,455.97 801,455.56 807,455.16 813,454.75 819,454.35 825,453.95 831,453.54 837,453.14 843,452.74 849,452.33 855,451.93 861,451.53 867,451.12 873,450.72 879,450.32 885,449.92 891,449.51 897,449.11 903,448.71 909,448.31 915,447.91 921,447.51 927,447.10 933,446.70 939,446.30 945,445.90 951,445.50 957,445.10 963,444.70 969,444.31 975,443.91 981,443.51 987,443.11 993,442.71 999,442.32 1005,441.92 1011,441.52 1017,441.13 1023,440.73 1029,440.34 1035,439.94 1041,439.55 1047,439.16 1053,438.76 1059,438.37 1065,437.98 1071,437.56 1077,437.11 1083,436.66 1089,436.21 1095,435.76 1101,435.32 1107,434.87 1113,434.42 1119,433.98 1125,433.54 1131,433.09 1137,432.65 1143,432.21 1149,431.80 1155,431.42 1161,431.04 1167,430.66 1173,430.29 1179,429.91 1185,429.53 1191,429.16 1197,428.78 1203,428.41 1209,428.04 1215,427.66 1221,427.29 1227,426.92" fill="none" stroke-width="2"/>
<polyline points="33,638.16 39,637.86 45,637.55 51,637.23 57,636.92 63,636.60 69,636.29 75,635.97 81,635.65 87,635.32 93,635.00 99,634.67 105,634.34 111,634.01 117,633.69 123,633.38 129,633.07 135,632.75 141,632.44 147,632.12 153,631.80 159,631.48 165,631.16 171,630.83 177,630.51 183,630.18 189,629.85 195,629.52 201,629.19 207,628.86 213,628.53 219,628.19 225,627.86 231,627.52 237,627.18 243,626.84 249,626.50 255,626.16 261,625.81 267,625.47 273,625.12 279,624.78 285,624.43 291,624.08 297,623.73 303,623.37 309,623.02 315,622.67 321,622.31 327,621.96 333,621.60 339,621.24 345,620.88 351,620.52 357,620.16 363,619.79 369,619.43 375,619.06 381,618.70 387,618.33 393,617.96 399,617.59 405,617.22 411,616.85 417,616.48 423,616.11 429,615.74 435,615.36 441,614.99 447,614.61 453,614.23 459,613.86 465,613.48 471,613.10 477,612.71 483,612.30 489,611.89 495,611.48 501,611.07 507,610.66 513,610.24 519,609.83 525,609.42 531,609.00 537,608.59 543,608.17 549,607.75 555,607.34 561,606.93 567,606.54 573,606.15 579,605.76 585,605.37 591,604.97 597,604.58 603,604.18 609,603.79 615,603.39 621,603.00 627,602.60 633,602.21 639,601.81 645,601.41 651,600.92 657,600.32 663,599.72 669,599.12 675,598.52 681,597.92 687,597.32 693,596.72 699,596.12 705,595.51 711,595.01 717,594.61 723,594.21 729,593.80 735,593.40 741,593.00 747,592.59 753,592.19 759,591.79 765,591.38 771,590.98 777,590.58 783,590.17 789,589.77 795,589.37 801,588.96 807,588.56 813,588.15 819,587.75 825,587.35 831,586.94 837,586.54 843,586.14 849,585.73 855,585.33 861,584.93 867,584.52 873,584.12 879,583.72 885,583.32 891,582.91 897,582.51 903,582.11 909,581.71 915,581.31 921,580.91 927,580.50 933,580.10 939,579.70 945,579.30 951,578.90 957,578.50 963,578.10 969,577.71 975,577.31 981,576.91 987,576.51 993,576.11 999,575.72 1005,575.32 1011,574.92 1017,574.53 1023,574.13 1029,573.74 1035,573.34 1041,572.95 1047,572.56 1053,572.16 1059,571.77 1065,571.38 1071,570.96 1077,570.51 1083,570.06 1089,569.61 1095,569.16 1101,568.72 1107,568.27 1113,567.82 1119,567.38 1125,566.94 1131,566.49 1137,566.05 1143,565.61 1149,565.20 1155,564.82 1161,564.44 1167,564.06 1173,563.69 1179,563.31 1185,562.93 1191,562.56 1197,562.18 1203,561.81 1209,561.44 1215,561.06 1221,560.69 1227,560.32" fill="none" stroke-width="2"/>
<polyline points="706,729.61 712,729.12 718,728.70 724,728.28 730,727.86 736,727.43 742,727.01 748,726.59 754,726.17 760,725.74 766,725.32 772,724.90 778,724.47 784,724.05 790,723.63 796,723.20 802,722.78 808,722.36 814,721.93 820,721.51 826,721.09 832,720.66 838,720.24 844,719.82 850,719.39 856,718.97 862,718.55 868,718.13 874,717.70 880,717.28 886,716.86 892,716.44 898,716.02 904,715.59 910,715.17 916,714.75 922,714.33 928,713.91 934,713.49 940,713.07 946,712.65 952,712.23 958,711.81 964,711.39 970,710.97 976,710.56 982,710.14 988,709.72 994,709.30 1000,708.89 1006,708.47 1012,708.05 1018,707.64 1024,707.22 1030,706.81 1036,706.40 1042,705.98 1048,705.57 1054,705.16 1060,704.75 1066,704.34 1072,703.88 1078,703.41 1084,702.95 1090,702.48 1096,702.01 1102,701.54 1108,701.08 1114,700.61 1120,700.15 1126,699.69 1132,699.22 1138,698.76 1144,698.30 1150,697.88 1156,697.48 1162,697.08 1168,696.69 1174,696.29 1180,695.89 1186,695.50 1192,695.10 1198,694.71 1204,694.31 1210,693.92 1216,693.53 1222,693.14" fill="none" stroke-width="2"/>
</g>
<g shape-rendering="crispEdges">
<rect x="1209" y="106" width="9" height="7" fill="#00ff00"/>
<rect x="1209" y="113" width="9" height="8" fill="#008000"/>
<rect x="1211" y="114" width="6" height="6" fill="#fff"/>
<rect x="1212" y="116" width="4" height="3" fill="#000"/>
<rect x="1213" y="117" width="2" height="1" fill="#fff"/>
<rect x="1209" y="720" width="9" height="9" fill="#00ff00"/>
<rect x="1118" y="727" width="4" height="5" fill="#ffff00"/>
<rect x="1209.5" y="411.5" width="8" height="12" fill="#fff" stroke="#008000"/>
</g>
<circle cx="1213.5" cy="417.5" r="2.8" fill="#fff" stroke="#000" stroke-width="1"/>
<rect x="1220" y="467" width="31" height="13" fill="#fff" shape-rendering="crispEdges"/>
<g font-family="Liberation Sans, Arial, sans-serif" font-size="11px">
<text x="34" y="715" fill="#fff" font-size="9px" textLength="159" lengthAdjust="spacingAndGlyphs">FIBONACCI/GALACTIC TRADER(TM)</text>
<text x="1230" y="140" fill="#fff" font-size="10.67px">2600</text>
<text x="1230" y="214" fill="#fff" font-size="10.67px">2400</text>
<text x="1230" y="288" fill="#fff" font-size="10.67px">2200</text>
<text x="1230" y="362" fill="#fff" font-size="10.67px">2000</text>
<text x="1230" y="436" fill="#fff" font-size="10.67px">1800</text>
<text x="1230" y="510" fill="#fff" font-size="10.67px">1600</text>
<text x="1230" y="584" fill="#fff" font-size="10.67px">1400</text>
<text x="1230" y="658" fill="#fff" font-size="10.67px">1200</text>
<text x="1230" y="732" fill="#fff" font-size="10.67px">1000</text>
<text x="1224.5" y="477.5" fill="#111" font-size="10.67px">1688</text>
<text x="30.5" y="742.5" fill="#fff" font-size="10.67px" textLength="55.5" lengthAdjust="spacingAndGlyphs">2008-07-28</text>
<text x="114.5" y="742.5" fill="#fff" font-size="10.67px" textLength="55.5" lengthAdjust="spacingAndGlyphs">2008-08-18</text>
<text x="204.5" y="742.5" fill="#fff" font-size="10.67px" textLength="55.5" lengthAdjust="spacingAndGlyphs">2008-09-08</text>
<text x="294.5" y="742.5" fill="#fff" font-size="10.67px" textLength="55.5" lengthAdjust="spacingAndGlyphs">2008-09-29</text>
<text x="384.5" y="742.5" fill="#fff" font-size="10.67px" textLength="55.5" lengthAdjust="spacingAndGlyphs">2008-10-20</text>
<text x="474.5" y="742.5" fill="#fff" font-size="10.67px" textLength="55.5" lengthAdjust="spacingAndGlyphs">2008-11-10</text>
<text x="558.5" y="742.5" fill="#fff" font-size="10.67px" textLength="55.5" lengthAdjust="spacingAndGlyphs">2008-12-01</text>
<text x="648.5" y="742.5" fill="#fff" font-size="10.67px" textLength="55.5" lengthAdjust="spacingAndGlyphs">2008-12-22</text>
<text x="708.5" y="742.5" fill="#fff" font-size="10.67px" textLength="55.5" lengthAdjust="spacingAndGlyphs">2009-01-12</text>
<text x="798.5" y="742.5" fill="#fff" font-size="10.67px" textLength="55.5" lengthAdjust="spacingAndGlyphs">2009-02-02</text>
<text x="888.5" y="742.5" fill="#fff" font-size="10.67px" textLength="55.5" lengthAdjust="spacingAndGlyphs">2009-02-23</text>
<text x="978.5" y="742.5" fill="#fff" font-size="10.67px" textLength="55.5" lengthAdjust="spacingAndGlyphs">2009-03-16</text>
<text x="1068.5" y="742.5" fill="#fff" font-size="10.67px" textLength="55.5" lengthAdjust="spacingAndGlyphs">2009-04-06</text>
<text x="1146.5" y="742.5" fill="#fff" font-size="10.67px" textLength="55.5" lengthAdjust="spacingAndGlyphs">2009-04-27</text>
</g>
<rect x="1234.5" y="733.5" width="15" height="13" fill="#c8c8c8" stroke="#fff" shape-rendering="crispEdges"/>
<text x="1236.5" y="744" font-family="Liberation Sans, Arial, sans-serif" font-size="10px" fill="#000">TF</text>
</svg>
<div class="abs" style="left:1251px;top:103px;width:29px;height:666px;background:#f0f0f0"></div>
<div class="abs" style="left:1251px;top:103px;width:1px;height:644px;background:#fdfdfd"></div><div class="abs" style="left:1252px;top:103px;width:1px;height:456px;background:#fbfbfb"></div>
<div class="abs" style="left:1279px;top:103px;width:1px;height:456px;background:#a0a0a0"></div>
<div class="abs" style="left:1251px;top:559px;width:28px;height:1px;background:#a0a0a0"></div>
<div class="abs" style="left:29px;top:747px;width:1222px;height:22px;background:#f0f0f0"></div>
<div class="abs" style="left:29px;top:747px;width:1222px;height:1px;background:#fff"></div>
<div class="abs" style="left:29px;top:747px;width:1px;height:22px;background:#a0a0a0"></div>
<div class="sunk" style="left:34px;top:750px;width:157px;height:16px"></div>
<div class="sunk" style="left:1019px;top:750px;width:232px;height:16px"></div>
<div class="abs" style="left:4px;top:48px;width:1px;height:25px;background:#fff;"></div>
<div class="abs" style="left:6px;top:48px;width:1px;height:25px;background:#a0a0a0;"></div>
<div class="abs" style="left:5px;top:72px;width:2px;height:1px;background:#a0a0a0;"></div>
<div class="abs" style="left:215px;top:46px;width:1px;height:28px;background:#fff;"></div>
<div class="abs" style="left:216px;top:46px;width:1px;height:28px;background:#a0a0a0;"></div>
<div class="abs" style="left:221px;top:48px;width:1px;height:25px;background:#fff;"></div>
<div class="abs" style="left:223px;top:48px;width:1px;height:25px;background:#a0a0a0;"></div>
<div class="abs" style="left:222px;top:72px;width:2px;height:1px;background:#a0a0a0;"></div>
<div class="abs" style="left:594px;top:46px;width:1px;height:28px;background:#fff;"></div>
<div class="abs" style="left:595px;top:46px;width:1px;height:28px;background:#a0a0a0;"></div>
<div class="abs" style="left:600px;top:48px;width:1px;height:25px;background:#fff;"></div>
<div class="abs" style="left:602px;top:48px;width:1px;height:25px;background:#a0a0a0;"></div>
<div class="abs" style="left:601px;top:72px;width:2px;height:1px;background:#a0a0a0;"></div>
<div class="abs" style="left:893px;top:46px;width:1px;height:28px;background:#fff;"></div>
<div class="abs" style="left:894px;top:46px;width:1px;height:28px;background:#a0a0a0;"></div>
<div class="abs" style="left:4px;top:77px;width:1px;height:24px;background:#fff;"></div>
<div class="abs" style="left:6px;top:77px;width:1px;height:24px;background:#a0a0a0;"></div>
<div class="abs" style="left:5px;top:100px;width:2px;height:1px;background:#a0a0a0;"></div>
<div class="abs" style="left:233px;top:75px;width:1px;height:27px;background:#fff;"></div>
<div class="abs" style="left:234px;top:75px;width:1px;height:27px;background:#a0a0a0;"></div>
<svg class="ic" style="left:14px;top:51px" width="18" height="18" viewBox="0 0 18 18" ><rect width="18" height="18" fill="#c0c0c0"/><path d="M1.5 1.5h5l3 3v9.5h-8z" fill="#fff" stroke="#000" shape-rendering="crispEdges"/><path d="M6.5 1.5v3h3" fill="none" stroke="#000" shape-rendering="crispEdges"/><g font-family="Liberation Sans, Arial, sans-serif" font-size="6.5px" font-weight="bold" fill="#0000ff"><text x="11.5" y="6">N</text><text x="12" y="11.5">E</text><text x="11" y="17">W</text></g></svg>
<svg class="ic" style="left:38px;top:51px" width="18" height="18" viewBox="0 0 18 18" ><rect width="18" height="18" fill="#c0c0c0"/><path d="M.5 2.5h5l3 3v9h-8z" fill="#fff" stroke="#000" shape-rendering="crispEdges"/><path d="M5.5 2.5v3h3" fill="none" stroke="#000" shape-rendering="crispEdges"/><g shape-rendering="crispEdges"><rect x="2" y="5" width="2" height="1" fill="#f00"/><rect x="3" y="7" width="3" height="1" fill="#00f"/><rect x="2" y="9" width="2" height="1" fill="#f00"/><rect x="4" y="11" width="3" height="1" fill="#00f"/><rect x="2" y="12" width="2" height="1" fill="#00f"/></g><path d="M9 6h9v2h-9zM11.500 2.500l6.500 4.500h-3.500l-4.500-3z" fill="#f00"/><path d="M8 11h10v2h-10zM8 12l6.500 4.500 1.500-1.200-4.500-3.300z" fill="#00f"/></svg>
<svg class="ic" style="left:62px;top:51px" width="18" height="18" viewBox="0 0 18 18" ><g fill="#000080" shape-rendering="crispEdges"><rect x="1" y="1" width="1" height="10"/><rect x="0" y="6" width="1" height="1"/><rect x="2" y="3" width="1" height="1"/><rect x="5" y="3" width="1" height="13"/><rect x="4" y="5" width="1" height="1"/><rect x="6" y="12" width="1" height="1"/><rect x="9" y="2" width="1" height="6"/><rect x="10" y="3" width="1" height="1"/><rect x="13" y="2" width="1" height="5"/><rect x="14" y="2" width="1" height="1"/></g><text x="10.500" y="16.500" font-family="Liberation Mono, monospace" font-weight="bold" font-size="12px" fill="#800000">n</text></svg>
<svg class="ic" style="left:86px;top:50px" width="18" height="18" viewBox="0 0 18 18" ><g fill="#000080" shape-rendering="crispEdges"><rect x="1" y="1" width="1" height="10"/><rect x="0" y="6" width="1" height="1"/><rect x="2" y="3" width="1" height="1"/><rect x="5" y="3" width="1" height="13"/><rect x="4" y="5" width="1" height="1"/><rect x="6" y="12" width="1" height="1"/><rect x="9" y="2" width="1" height="6"/><rect x="10" y="3" width="1" height="1"/><rect x="13" y="2" width="1" height="5"/><rect x="14" y="2" width="1" height="1"/></g><text x="10.500" y="16.500" font-family="Liberation Mono, monospace" font-weight="bold" font-size="12px" fill="#800080">v</text></svg>
<svg class="ic" style="left:110px;top:51px" width="18" height="18" viewBox="0 0 18 18" ><text x="1" y="11.5" font-family="Liberation Mono, monospace" font-weight="bold" font-size="13px" fill="#008000" textLength="16" lengthAdjust="spacingAndGlyphs">pg</text></svg>
<svg class="ic" style="left:135px;top:52px" width="16" height="16" viewBox="0 0 16 16" ><g shape-rendering="crispEdges"><rect x="1" y="1" width="14" height="14" fill="#fff" stroke="#000"/><rect x="7" y="1" width="2" height="14" fill="#000"/><rect x="1" y="7" width="14" height="1" fill="#000"/><rect x="1" y="13" width="14" height="2" fill="#808080"/><g fill="#ffff00"><rect x="2" y="2" width="1" height="4"/><rect x="4" y="3" width="1" height="3"/><rect x="5" y="2" width="1" height="2"/><rect x="10" y="2" width="1" height="3"/><rect x="12" y="3" width="1" height="3"/><rect x="13" y="2" width="1" height="2"/><rect x="2" y="9" width="1" height="4"/><rect x="4" y="10" width="1" height="3"/><rect x="5" y="9" width="1" height="2"/><rect x="10" y="9" width="1" height="3"/><rect x="12" y="10" width="1" height="3"/><rect x="13" y="9" width="1" height="2"/></g></g></svg>
<svg class="ic" style="left:157px;top:50px" width="22" height="20" viewBox="0 0 22 20" ><g shape-rendering="crispEdges"><rect x="5" y="1" width="2" height="9" fill="#000"/><path d="M1.5 6.5l3.5 4" stroke="#000" stroke-width="1.6" fill="none"/><rect x="10" y="1" width="2" height="10" fill="#f00"/><path d="M12 1.5l3 3" stroke="#f00" stroke-width="1.8" fill="none"/></g><text x="0" y="19.500" font-family="Liberation Sans, Arial, sans-serif" font-weight="bold" font-size="9.500px" fill="#0000ff" textLength="19" lengthAdjust="spacingAndGlyphs">SYM</text></svg>
<svg class="ic" style="left:183px;top:50px" width="22" height="20" viewBox="0 0 22 20" ><g shape-rendering="crispEdges"><rect x="5" y="1" width="2" height="9" fill="#000"/><path d="M1.5 6.5l3.5 4" stroke="#000" stroke-width="1.6" fill="none"/><rect x="10" y="1" width="2" height="10" fill="#f00"/><path d="M12 1.5l3 3" stroke="#f00" stroke-width="1.8" fill="none"/></g><text x="0" y="19.500" font-family="Liberation Sans, Arial, sans-serif" font-weight="bold" font-size="9.500px" fill="#0000ff" textLength="16" lengthAdjust="spacingAndGlyphs">TIME</text></svg>
<svg class="ic" style="left:207px;top:64px" width="6" height="3" viewBox="0 0 6 3" shape-rendering="crispEdges"><path d="M0 0h5l-2.5 3z" fill="#000"/></svg>
<svg class="ic" style="left:232px;top:51px" width="18" height="18" viewBox="0 0 18 18" ><g shape-rendering="crispEdges" stroke="#000"><rect x="7.5" y="1.5" width="7" height="7" fill="#f00"/><rect x="5.5" y="3.5" width="7" height="7" fill="#0f0"/><rect x="3.5" y="6.5" width="7" height="7" fill="#0ff"/><rect x="1.5" y="9.5" width="7" height="6" fill="#ff0"/></g></svg>
<svg class="ic" style="left:255px;top:51px" width="18" height="18" viewBox="0 0 18 18" ><g shape-rendering="crispEdges" stroke="#000"><rect x="5.5" y="1.5" width="7" height="7" fill="#0f0"/><rect x="3.5" y="4.5" width="7" height="7" fill="#0ff"/><rect x="1.5" y="7.5" width="7" height="6" fill="#ff0"/></g><g shape-rendering="crispEdges" fill="#000"><rect x="12" y="8" width="2" height="8"/><rect x="9" y="11" width="8" height="2"/></g></svg>
<svg class="ic" style="left:279px;top:51px" width="19" height="18" viewBox="0 0 19 18" ><g shape-rendering="crispEdges" fill="#00f"><rect x="7" y="1" width="1" height="14"/><rect x="10" y="1" width="1" height="14"/><rect x="11" y="3" width="1" height="1"/><rect x="11" y="7" width="1" height="1"/><rect x="6" y="10" width="1" height="1"/></g><g stroke="#000" stroke-width="1" fill="none"><path d="M0 8.5h7M3.5 5l3.5 3.5-3.5 3.5M18 8.5h-7M14.500 5l-3.500 3.500 3.500 3.500"/></g></svg>
<svg class="ic" style="left:303px;top:51px" width="18" height="18" viewBox="0 0 18 18" ><g shape-rendering="crispEdges" fill="#00f"><rect x="1" y="1" width="1" height="14"/><rect x="0" y="3" width="1" height="1"/><rect x="15" y="1" width="1" height="14"/><rect x="16" y="4" width="1" height="1"/><rect x="14" y="12" width="1" height="1"/></g><g stroke="#000" stroke-width="1" fill="none"><path d="M3 8.5h11M6.5 5l-3.500 3.500 3.500 3.500M10.500 5l3.500 3.500-3.500 3.500"/></g></svg>
<svg class="ic" style="left:327px;top:51px" width="18" height="18" viewBox="0 0 18 18" ><g shape-rendering="crispEdges" fill="#00f"><rect x="7" y="1" width="3" height="14"/><rect x="5" y="2" width="2" height="2"/><rect x="10" y="12" width="2" height="2"/></g><g stroke="#000" stroke-width="1" fill="none"><path d="M0.500 8.500h7M3.500 5l-3.500 3.500 3.500 3.500M17.500 8.500h-7M14.500 5l3.500 3.500-3.500 3.500"/></g></svg>
<svg class="ic" style="left:352px;top:51px" width="16" height="18" viewBox="0 0 16 18" ><g shape-rendering="crispEdges" fill="#00f"><rect x="7" y="1" width="1" height="14"/><rect x="8" y="4" width="1" height="1"/><rect x="6" y="11" width="1" height="1"/></g><g stroke="#000" stroke-width="1" fill="none"><path d="M0 8.500h7M3.500 5l3.500 3.500-3.500 3.500M15 8.500h-7M11.500 5l-3.500 3.500 3.500 3.500"/></g></svg>
<div class="abs" style="left:374px;top:49px;width:1px;height:20px;background:#a0a0a0;"></div>
<svg class="ic" style="left:383px;top:50px" width="16" height="20" viewBox="0 0 16 20" ><text x="1" y="18" font-family="Liberation Serif, serif" font-style="italic" font-weight="bold" font-size="21px" fill="#0000ff">i</text><path d="M11.500 1l.6 1.600 1.700.1-1.300 1 .5 1.700-1.500-1-1.500 1 .5-1.700-1.300-1 1.700-.1z" fill="#00f"/></svg>
<svg class="ic" style="left:404px;top:50px" width="20" height="20" viewBox="0 0 20 20" ><text x="2" y="17" font-family="Liberation Serif, serif" font-style="italic" font-weight="bold" font-size="20px" fill="#0000ff">T</text></svg>
<svg class="ic" style="left:430px;top:51px" width="17" height="18" viewBox="0 0 17 18" ><path d="M1 2h3l1 2h-4zM16 2h-3l-1 2h4zM1 7h3l1 2h-3zM16 7h-3l-1 2h3zM2 11h3l1 2h-2zM15 11h-3l-1 2h2z" fill="#000"/><path d="M5 1h7v14l-2 2h-3l-2-2z" fill="#000"/><circle cx="8.500" cy="3.500" r="1.800" fill="#f00"/><circle cx="8.500" cy="8" r="1.800" fill="#ff0"/><circle cx="8.500" cy="12.500" r="1.800" fill="#0f0"/></svg>
<div class="abs" style="left:452px;top:49px;width:1px;height:20px;background:#a0a0a0;"></div>
<svg class="ic" style="left:459px;top:51px" width="18" height="18" viewBox="0 0 18 18" ><path d="M5 1.500h9l-2 5h-9z" fill="#fff" stroke="#000"/><path d="M6 3.500h6M5.500 5h6" stroke="#808080"/><path d="M1.500 7.500l2-1.500h11l2 1.500v5l-2 2.500h-11l-2-2z" fill="#c0c0c0" stroke="#000"/><path d="M2 10.500h14" stroke="#000"/><path d="M4 13.500h10" stroke="#fff"/><path d="M3 8.500h11" stroke="#fff"/></svg>
<svg class="ic" style="left:484px;top:50px" width="17" height="20" viewBox="0 0 17 20" ><g shape-rendering="crispEdges"><rect x="0.500" y="2.500" width="11" height="12" fill="#fff" stroke="#000"/><rect x="1" y="3" width="10" height="2" fill="#000080"/><rect x="4.500" y="5.500" width="11" height="12" fill="#fff" stroke="#000"/><rect x="5" y="6" width="10" height="2" fill="#000080"/><rect x="3" y="1" width="1" height="3" fill="#000"/><rect x="8" y="1" width="1" height="3" fill="#000"/><rect x="13" y="4" width="1" height="3" fill="#000"/></g><text x="6.500" y="16" font-family="Liberation Sans, Arial, sans-serif" font-weight="bold" font-size="9px" fill="#800000">7</text><text x="1" y="12" font-family="Liberation Sans, Arial, sans-serif" font-weight="bold" font-size="8px" fill="#c00000">8</text></svg>
<svg class="ic" style="left:508px;top:49px" width="17" height="22" viewBox="0 0 17 22" ><text x="1" y="18" font-family="Liberation Sans, Arial, sans-serif" font-weight="bold" font-size="21px" fill="#0000ff">$</text></svg>
<div class="abs" style="left:530px;top:49px;width:1px;height:20px;background:#a0a0a0;"></div>
<svg class="ic" style="left:538px;top:52px" width="15" height="16" viewBox="0 0 15 16" ><g shape-rendering="crispEdges"><path d="M1.500 1.500h12v13h-6v-7h-6z" fill="#ffff00" stroke="#000" stroke-width="1.500"/><g fill="#000"><rect x="3" y="2" width="1" height="3"/><rect x="5" y="2" width="1" height="2"/><rect x="7" y="2" width="1" height="3"/><rect x="9" y="2" width="1" height="2"/><rect x="11" y="2" width="1" height="3"/><rect x="10" y="9" width="3" height="1"/><rect x="11" y="11" width="2" height="1"/><rect x="10" y="13" width="3" height="1"/></g><g fill="#fff"><rect x="8" y="6" width="1" height="1"/><rect x="10" y="7" width="1" height="1"/><rect x="9" y="10" width="1" height="1"/><rect x="8" y="12" width="1" height="1"/><rect x="12" y="6" width="1" height="1"/></g></g></svg>
<svg class="ic" style="left:561px;top:51px" width="19" height="18" viewBox="0 0 19 18" ><g shape-rendering="crispEdges"><rect x="3" y="1" width="1" height="15" fill="#000080"/><rect x="1" y="13" width="2" height="1" fill="#000080"/><rect x="4" y="3" width="2" height="1" fill="#000080"/><rect x="8" y="1" width="1" height="16" fill="#f00"/><rect x="6.500" y="5.500" width="4" height="7" fill="#c0c0c0" stroke="#f00"/><rect x="13" y="1" width="4" height="10" fill="#000"/><rect x="14" y="11" width="2" height="1" fill="#000"/></g></svg>
<svg class="ic" style="left:586px;top:64px" width="6" height="3" viewBox="0 0 6 3" shape-rendering="crispEdges"><path d="M0 0h5l-2.5 3z" fill="#000"/></svg>
<svg class="ic" style="left:610px;top:51px" width="20" height="18" viewBox="0 0 20 18" ><g shape-rendering="crispEdges"><rect x="0.500" y="4.500" width="9" height="13" fill="none" stroke="#0000ff" stroke-width="1"/><rect x="9.500" y="0.500" width="9" height="13" fill="none" stroke="#0000ff" stroke-width="1"/><g fill="#000"><rect x="2" y="8" width="1" height="6"/><rect x="4" y="6" width="1" height="7"/><rect x="6" y="9" width="1" height="6"/><rect x="8" y="10" width="1" height="6"/><rect x="12" y="5" width="1" height="6"/><rect x="14" y="3" width="1" height="7"/><rect x="16" y="2" width="1" height="6"/><rect x="3" y="11" width="1" height="1"/><rect x="7" y="12" width="1" height="1"/><rect x="13" y="8" width="1" height="1"/></g></g></svg>
<svg class="ic" style="left:635px;top:51px" width="20" height="18" viewBox="0 0 20 18" ><g shape-rendering="crispEdges"><rect x="0.500" y="4.500" width="9" height="13" fill="none" stroke="#800080"/><rect x="9.500" y="0.500" width="9" height="13" fill="none" stroke="#800080"/><rect x="1" y="8" width="8" height="1" fill="#00f"/><rect x="1" y="14" width="8" height="1" fill="#00f"/><rect x="10" y="4" width="8" height="1" fill="#00f"/><rect x="10" y="10" width="8" height="1" fill="#00f"/><g fill="#000"><rect x="2" y="8" width="1" height="6"/><rect x="4" y="6" width="1" height="7"/><rect x="6" y="9" width="1" height="6"/><rect x="12" y="5" width="1" height="6"/><rect x="14" y="3" width="1" height="7"/><rect x="16" y="2" width="1" height="6"/></g><g fill="#00f"><rect x="3" y="7" width="1" height="8"/><rect x="7" y="8" width="1" height="6"/><rect x="13" y="3" width="1" height="8"/><rect x="15" y="2" width="1" height="8"/></g></g></svg>
<svg class="ic" style="left:660px;top:51px" width="19" height="18" viewBox="0 0 19 18" ><g shape-rendering="crispEdges"><g fill="#f00"><rect x="7" y="0" width="2" height="1"/><rect x="11" y="0" width="2" height="1"/><rect x="15" y="0" width="2" height="1"/><rect x="3" y="4" width="15" height="2"/><rect x="8" y="8" width="2" height="2"/><rect x="12" y="8" width="2" height="1"/><rect x="16" y="8" width="2" height="1"/></g><rect x="14" y="1" width="2" height="13" fill="#ff0"/><rect x="3" y="6" width="2" height="12" fill="#ff0"/><g fill="#008000"><rect x="0" y="8" width="3" height="1"/><rect x="5" y="8" width="3" height="1"/><rect x="0" y="12" width="10" height="2"/><rect x="0" y="16" width="2" height="1"/><rect x="4" y="16" width="2" height="1"/><rect x="8" y="16" width="2" height="1"/></g></g></svg>
<div class="abs" style="left:684px;top:49px;width:1px;height:20px;background:#a0a0a0;"></div>
<svg class="ic" style="left:692px;top:51px" width="19" height="18" viewBox="0 0 19 18" ><g shape-rendering="crispEdges"><g fill="#ff0000"><rect x="5" y="0" width="2" height="2"/><rect x="9" y="0" width="2" height="2"/><rect x="13" y="0" width="2" height="2"/><rect x="1" y="4" width="15" height="2"/><rect x="5" y="8" width="2" height="2"/><rect x="9" y="8" width="2" height="2"/><rect x="13" y="8" width="2" height="2"/></g><rect x="0" y="5" width="2" height="12" fill="#ff0"/><rect x="2" y="9" width="2" height="2" fill="#ff0"/></g></svg>
<svg class="ic" style="left:715px;top:50px" width="22" height="20" viewBox="0 0 22 20" ><g font-family="Liberation Sans, Arial, sans-serif" font-weight="bold" font-size="9px" fill="#000080"><text x="0" y="8" textLength="19" lengthAdjust="spacingAndGlyphs">Live</text><text x="0" y="17" textLength="19" lengthAdjust="spacingAndGlyphs">Rng</text></g></svg>
<div class="abs" style="left:740px;top:49px;width:1px;height:20px;background:#a0a0a0;"></div>
<svg class="ic" style="left:748px;top:51px" width="19" height="18" viewBox="0 0 19 18" ><g shape-rendering="crispEdges"><g fill="#000080"><rect x="5" y="0" width="2" height="2"/><rect x="9" y="0" width="2" height="2"/><rect x="13" y="0" width="2" height="2"/><rect x="1" y="4" width="15" height="2"/><rect x="5" y="8" width="2" height="2"/><rect x="9" y="8" width="2" height="2"/><rect x="13" y="8" width="2" height="2"/></g><rect x="0" y="5" width="2" height="12" fill="#ff0"/><rect x="2" y="9" width="2" height="2" fill="#ff0"/></g></svg>
<svg class="ic" style="left:771px;top:50px" width="22" height="20" viewBox="0 0 22 20" ><g font-family="Liberation Sans, Arial, sans-serif" font-weight="bold" font-size="9px" fill="#000080"><text x="0" y="8" textLength="19" lengthAdjust="spacingAndGlyphs">Live</text><text x="0" y="17" textLength="19" lengthAdjust="spacingAndGlyphs">Rng</text></g></svg>
<div class="abs" style="left:796px;top:49px;width:1px;height:20px;background:#a0a0a0;"></div>
<svg class="ic" style="left:804px;top:49px" width="18" height="22" viewBox="0 0 18 22" ><text x="0" y="9.500" font-family="Liberation Sans, Arial, sans-serif" font-size="10px" fill="#ff0000" textLength="15" lengthAdjust="spacingAndGlyphs">HP</text><text x="0" y="20" font-family="Liberation Sans, Arial, sans-serif" font-weight="bold" font-size="12px" fill="#0000ff" textLength="15" lengthAdjust="spacingAndGlyphs">FZ</text></svg>
<svg class="ic" style="left:826px;top:49px" width="22" height="22" viewBox="0 0 22 22" ><g font-family="Liberation Mono, monospace" font-weight="bold" fill="#ff00ff"><text x="0" y="12.500" font-size="14px">F</text><text x="7.500" y="20" font-size="14px">h</text><text x="13" y="9" font-size="10px">z</text></g></svg>
<div class="abs" style="left:852px;top:49px;width:1px;height:20px;background:#a0a0a0;"></div>
<svg class="ic" style="left:858px;top:52px" width="20" height="16" viewBox="0 0 20 16" ><text x="1" y="13.500" font-family="Liberation Mono, monospace" font-weight="bold" font-size="15px" fill="#000" textLength="17" lengthAdjust="spacingAndGlyphs">JZ</text></svg>
<svg class="ic" style="left:885px;top:65px" width="6" height="3" viewBox="0 0 6 3" shape-rendering="crispEdges"><path d="M0 0h5l-2.5 3z" fill="#000"/></svg>
<svg class="ic" style="left:14px;top:79px" width="19" height="19" viewBox="0 0 19 19" ><g fill="none" stroke-width="1" shape-rendering="crispEdges"><path d="M0.500 5.500l4.500-4h3.500l2.500 3.500 2.500 4v3.500h5.500" stroke="#f0f"/><path d="M0.500 12.500l4.500-4h3.500l3 4.500 1 3 1.500 1.500h4" stroke="#f0f"/><path d="M0.500 7.500l3.500-1.500 5-2.500 5.500-2.500" stroke="#00f"/><path d="M0.500 14.500l4-2 6-3 8-3.500" stroke="#00f"/></g></svg>
<div class="abs" style="left:37px;top:78px;width:1px;height:20px;background:#a0a0a0;"></div>
<svg class="ic" style="left:44px;top:80px" width="18" height="19" viewBox="0 0 18 19" ><path d="M2.500 0h3.500l2.500 2.500v3.500l-2.500 2.500h-3.500l-2.500-2.500v-3.500z" fill="#ff0"/><g shape-rendering="crispEdges"><rect x="8" y="8" width="2" height="2" fill="#f0f"/><rect x="14" y="15" width="1" height="3" fill="#f00"/><rect x="13" y="16" width="3" height="1" fill="#f00"/></g><circle cx="12" cy="12" r="2.200" fill="#00f"/></svg>
<svg class="ic" style="left:68px;top:80px" width="18" height="19" viewBox="0 0 18 19" ><path d="M2.500 0h3.500l2.500 2.500v3.500l-2.500 2.500h-3.500l-2.500-2.500v-3.500z" fill="#ff0"/><g shape-rendering="crispEdges"><rect x="8" y="8" width="2" height="2" fill="#f0f"/><rect x="14" y="15" width="1" height="3" fill="#f00"/><rect x="13" y="16" width="3" height="1" fill="#f00"/></g><circle cx="12" cy="12" r="2.200" fill="#00f"/><text x="0" y="18.500" font-family="Liberation Sans, Arial, sans-serif" font-size="12px" fill="#000">R</text></svg>
<div class="abs" style="left:91px;top:78px;width:1px;height:20px;background:#a0a0a0;"></div>
<svg class="ic" style="left:98px;top:80px" width="18" height="18" viewBox="0 0 18 18" ><g fill="none"><circle cx="9" cy="9" r="7.800" stroke="#000" stroke-width="1.200"/><circle cx="9" cy="9" r="5.700" stroke="#00f" stroke-width="1"/><circle cx="9" cy="9" r="3.700" stroke="#f00" stroke-width="1"/><circle cx="9" cy="9" r="1.700" stroke="#f0f" stroke-width="1"/></g></svg>
<svg class="ic" style="left:121px;top:79px" width="20" height="20" viewBox="0 0 20 20" ><circle cx="10" cy="10" r="8.800" fill="#f0f0f0" stroke="#000" stroke-width="1"/><g stroke="#808080" stroke-width="1"><path d="M10 2v2M10 16v2M2 10h2M16 10h2M15 4.500l-1 1M5 15.500l1-1M4.500 5l1 1M15.500 15l-1-1"/></g><circle cx="5.800" cy="6.300" r="2.500" fill="#00f"/><circle cx="9.500" cy="15.200" r="2" fill="#f00"/><path d="M9.500 8.300l1.200 1.500-1.200 1.500-1.200-1.500z" fill="#f0f"/></svg>
<svg class="ic" style="left:146px;top:80px" width="18" height="18" viewBox="0 0 18 18" ><g fill="none" shape-rendering="crispEdges"><path d="M0.500 6.500l4-5h3l3.500 4.500 1.500 3.500 3.500 3" stroke="#f0f"/><path d="M1 8.500l15-7.500" stroke="#00f"/><path d="M1 12l7-1.500 8-1" stroke="#808080"/><path d="M9 16l7-6" stroke="#f00"/><path d="M1 13.500l.5 2 1.500 1" stroke="#f00" stroke-dasharray="2 1"/></g></svg>
<svg class="ic" style="left:169px;top:79px" width="20" height="20" viewBox="0 0 20 20" ><g fill="none" stroke="#f0f" shape-rendering="crispEdges"><path d="M1 6.500l4-5h3l2 2.500"/><path d="M1 13.500l5-6"/><path d="M12.500 10v4l2 3.500h4.500"/><path d="M13 11.500h5.500v-2"/></g><text x="4.500" y="16" font-family="Liberation Sans, Arial, sans-serif" font-weight="bold" font-size="15.500px" fill="#000" textLength="8.500" lengthAdjust="spacingAndGlyphs">P</text></svg>
<div class="abs" style="left:193px;top:78px;width:1px;height:20px;background:#a0a0a0;"></div>
<svg class="ic" style="left:199px;top:79px" width="19" height="19" viewBox="0 0 19 19" ><rect width="19" height="19" fill="#fff"/><g shape-rendering="crispEdges"><rect x="3.500" y="1.500" width="13" height="15" fill="#fff" stroke="#000"/><rect x="4" y="16" width="13" height="1" fill="#000"/><rect x="2" y="3" width="2" height="1" fill="#000"/><rect x="2" y="5" width="2" height="1" fill="#000"/><rect x="2" y="7" width="2" height="1" fill="#000"/><rect x="2" y="9" width="2" height="1" fill="#000"/><rect x="2" y="11" width="2" height="1" fill="#000"/><rect x="2" y="13" width="2" height="1" fill="#000"/><rect x="2" y="15" width="2" height="1" fill="#000"/><rect x="4" y="3" width="1" height="1" fill="#0ff"/><rect x="4" y="5" width="1" height="1" fill="#0ff"/><rect x="4" y="7" width="1" height="1" fill="#0ff"/><rect x="4" y="9" width="1" height="1" fill="#0ff"/><rect x="4" y="11" width="1" height="1" fill="#0ff"/><rect x="4" y="13" width="1" height="1" fill="#0ff"/><rect x="6" y="3" width="1" height="1" fill="#f00"/><rect x="6" y="5" width="1" height="1" fill="#f00"/><rect x="6" y="7" width="1" height="1" fill="#f00"/><rect x="6" y="9" width="1" height="1" fill="#f00"/><rect x="6" y="11" width="1" height="1" fill="#f00"/><rect x="6" y="13" width="1" height="1" fill="#f00"/><rect x="8" y="3" width="1" height="1" fill="#0ff"/><rect x="8" y="5" width="1" height="1" fill="#0ff"/><rect x="8" y="7" width="1" height="1" fill="#0ff"/><rect x="8" y="9" width="1" height="1" fill="#0ff"/><rect x="8" y="11" width="1" height="1" fill="#0ff"/><rect x="8" y="13" width="1" height="1" fill="#0ff"/><rect x="10" y="3" width="1" height="1" fill="#0ff"/><rect x="10" y="5" width="1" height="1" fill="#0ff"/><rect x="10" y="7" width="1" height="1" fill="#0ff"/><rect x="10" y="9" width="1" height="1" fill="#0ff"/><rect x="10" y="11" width="1" height="1" fill="#0ff"/><rect x="10" y="13" width="1" height="1" fill="#0ff"/><rect x="12" y="3" width="1" height="1" fill="#0ff"/><rect x="12" y="5" width="1" height="1" fill="#0ff"/><rect x="12" y="7" width="1" height="1" fill="#0ff"/><rect x="12" y="9" width="1" height="1" fill="#0ff"/><rect x="12" y="11" width="1" height="1" fill="#0ff"/><rect x="12" y="13" width="1" height="1" fill="#0ff"/><rect x="14" y="3" width="1" height="1" fill="#0ff"/><rect x="14" y="5" width="1" height="1" fill="#0ff"/><rect x="14" y="7" width="1" height="1" fill="#0ff"/><rect x="14" y="9" width="1" height="1" fill="#0ff"/><rect x="14" y="11" width="1" height="1" fill="#0ff"/><rect x="14" y="13" width="1" height="1" fill="#0ff"/></g></svg>
<svg class="ic" style="left:225px;top:93px" width="6" height="3" viewBox="0 0 6 3" shape-rendering="crispEdges"><path d="M0 0h5l-2.5 3z" fill="#000"/></svg>
<div class="abs" style="left:1px;top:164px;width:27px;height:1px;background:#fff;"></div>
<div class="abs" style="left:1px;top:164px;width:1px;height:384px;background:#fff;"></div>
<div class="abs" style="left:28px;top:164px;width:1px;height:385px;background:#a0a0a0;"></div>
<div class="abs" style="left:3px;top:168px;width:23px;height:1px;background:#fff;"></div>
<div class="abs" style="left:4px;top:170px;width:23px;height:1px;background:#a0a0a0;"></div>
<div class="abs" style="left:26px;top:168px;width:1px;height:3px;background:#a0a0a0;"></div>
<svg class="ic" style="left:10px;top:179px" width="12" height="17" viewBox="0 0 12 17" ><path d="M1 1v12l3-3 2.500 5.500 2-1-2.500-5h4z" fill="#000"/></svg>
<svg class="ic" style="left:6px;top:203px" width="19" height="18" viewBox="0 0 19 18" ><g shape-rendering="crispEdges" fill="#000"><rect x="8" y="0" width="2" height="17"/><rect x="0" y="8" width="18" height="2"/></g></svg>
<div class="abs" style="left:3px;top:224px;width:24px;height:23px;background:#f6f6f6;box-sizing:border-box;border:1px solid;border-color:#a0a0a0 #fff #fff #a0a0a0"></div>
<svg class="ic" style="left:8px;top:229px" width="15" height="15" viewBox="0 0 15 15" ><rect x="0" y="0" width="15" height="15" fill="#e4e4e4"/><path d="M12 2.500h-5a4.500 4.500 0 0 0 0 10h5v-3h-4.500a1.700 1.700 0 0 1 0-4h4.500z" fill="#f00" stroke="#000" stroke-width=".8"/><rect x="10" y="2.500" width="2" height="3" fill="#fff" stroke="#000" stroke-width=".6"/><rect x="10" y="9.500" width="2" height="3" fill="#fff" stroke="#000" stroke-width=".6"/></svg>
<div class="abs" style="left:4px;top:249px;width:20px;height:1px;background:#a0a0a0;"></div>
<div class="abs" style="left:4px;top:250px;width:20px;height:1px;background:#fff;"></div>
<svg class="ic" style="left:6px;top:256px" width="18" height="18" viewBox="0 0 18 18" ><g fill="none" stroke="#000"><path d="M1.500 5.500h4M1.500 5.500v10h8v-4" fill="#fff" stroke-width="1.200"/><circle cx="9.500" cy="6" r="4.500" stroke-width="1.500" fill="#fff"/><path d="M12.500 9.500l4.500 5" stroke-width="2.200"/><path d="M7 5h4M7 7h4" stroke="#00c0c0"/></g></svg>
<svg class="ic" style="left:6px;top:281px" width="18" height="18" viewBox="0 0 18 18" ><g fill="none" stroke="#a0a0a0"><path d="M1.500 5.500h4M1.500 5.500v10h8v-4" fill="#d8d8d8" stroke-width="1.200"/><circle cx="9.500" cy="6" r="4.500" stroke-width="1.500" fill="#d8d8d8"/><path d="M12.500 9.500l4.500 5" stroke-width="2.200"/><path d="M7 5h4M7 7h4" stroke="#a0a0a0"/></g></svg>
<div class="abs" style="left:4px;top:303px;width:20px;height:1px;background:#a0a0a0;"></div>
<div class="abs" style="left:4px;top:304px;width:20px;height:1px;background:#fff;"></div>
<svg class="ic" style="left:6px;top:310px" width="18" height="18" viewBox="0 0 18 18" ><path d="M2 2.500h14" stroke="#000" stroke-width="1.500"/><path d="M2.500 3.500l11 11" stroke="#000" stroke-width="5" stroke-linecap="round"/><path d="M3.500 4.500l10 10" stroke="#00e000" stroke-width="2.600"/><circle cx="2.500" cy="3" r="1.300" fill="#fff" stroke="#000" stroke-width=".8"/></svg>
<svg class="ic" style="left:6px;top:334px" width="18" height="18" viewBox="0 0 18 18" ><path d="M2 2.500h14" stroke="#000" stroke-width="1.500"/><path d="M2.500 3.500l11 11" stroke="#000" stroke-width="5" stroke-linecap="round"/><path d="M3.500 4.500l10 10" stroke="#0000e0" stroke-width="2.600"/><circle cx="2.500" cy="3" r="1.300" fill="#fff" stroke="#000" stroke-width=".8"/></svg>
<svg class="ic" style="left:6px;top:358px" width="18" height="18" viewBox="0 0 18 18" ><path d="M2.500 2v15" stroke="#000" stroke-width="1.500"/><path d="M3.500 3.500l11 11" stroke="#000" stroke-width="5" stroke-linecap="round"/><path d="M4.500 4.500l10 10" stroke="#0000e0" stroke-width="2.600"/><circle cx="3" cy="2.500" r="1.300" fill="#fff" stroke="#000" stroke-width=".8"/></svg>
<svg class="ic" style="left:5px;top:381px" width="20" height="19" viewBox="0 0 20 19" ><path d="M1 14.500l13-13" stroke="#000" stroke-width="1.300"/><path d="M11.500 8.500l1.500-3 1.500 3z" fill="#ff0" stroke="#000" stroke-width=".6"/><rect x="11.500" y="8.500" width="3.500" height="8" fill="#0ff" stroke="#000" stroke-width="1"/></svg>
<div class="abs" style="left:4px;top:405px;width:20px;height:1px;background:#a0a0a0;"></div>
<div class="abs" style="left:4px;top:406px;width:20px;height:1px;background:#fff;"></div>
<svg class="ic" style="left:5px;top:412px" width="22" height="16" viewBox="0 0 22 16" ><text x="1.500" y="13" font-family="Liberation Sans, sans-serif" font-size="12.5px" fill="#000" textLength="18" lengthAdjust="spacingAndGlyphs">abc</text></svg>
<svg class="ic" style="left:5px;top:434px" width="22" height="20" viewBox="0 0 22 20" ><text x="1.500" y="15" font-family="Liberation Sans, sans-serif" font-size="12.5px" fill="#000" textLength="18" lengthAdjust="spacingAndGlyphs">abc</text><path d="M3.500 4l14 14M17.500 4l-13 14" stroke="#f00" stroke-width="1.200"/></svg>
<svg class="ic" style="left:9px;top:461px" width="14" height="16" viewBox="0 0 14 16" ><text x="2" y="13.500" font-family="Liberation Sans, Arial, sans-serif" font-weight="bold" font-size="14px" fill="#0000ff">F</text></svg>
<div class="abs" style="left:4px;top:483px;width:20px;height:1px;background:#a0a0a0;"></div>
<div class="abs" style="left:4px;top:484px;width:20px;height:1px;background:#fff;"></div>
<svg class="ic" style="left:5px;top:489px" width="20" height="20" viewBox="0 0 20 20" ><circle cx="10" cy="10" r="7.800" fill="none" stroke="#000" stroke-width="1.600"/></svg>
<svg class="ic" style="left:4px;top:515px" width="22" height="18" viewBox="0 0 22 18" ><ellipse cx="11" cy="8" rx="8.700" ry="6" fill="none" stroke="#000" stroke-width="1.600"/></svg>
<svg class="ic" style="left:4px;top:538px" width="4" height="7" viewBox="0 0 4 7" ><path d="M3.600 .5v6l-3.400-3z" fill="#000"/></svg>
<div class="abs" style="left:1px;top:548px;width:28px;height:1px;background:#a0a0a0;"></div>
<div class="abs" style="left:1255px;top:107px;width:22px;height:1px;background:#fff;"></div>
<div class="abs" style="left:1256px;top:109px;width:22px;height:1px;background:#a0a0a0;"></div>
<div class="abs" style="left:1277px;top:107px;width:1px;height:3px;background:#a0a0a0;"></div>
<svg class="ic" style="left:1256px;top:117px" width="22" height="17" viewBox="0 0 22 17" ><text x="1" y="15.500" font-family="Liberation Serif, serif" font-weight="bold" font-size="15.500px" fill="#000">A</text><path d="M6 2l13 8" stroke="#f00" stroke-width="1.500"/></svg>
<svg class="ic" style="left:1256px;top:140px" width="22" height="20" viewBox="0 0 22 20" ><path d="M2 2l17 6" stroke="#f00" stroke-width="1.500"/><path d="M2 2l17 16" stroke="#000" stroke-width="1.300"/><path d="M2 2l8 16" stroke="#0f0" stroke-width="1.300"/></svg>
<svg class="ic" style="left:1256px;top:166px" width="22" height="16" viewBox="0 0 22 16" ><g fill="none"><path d="M2 3a9 9 0 0 0 18 0" stroke="#000" stroke-width="1.200"/><path d="M4 2a7 7 0 0 0 14 0" stroke="#f0f" stroke-width="1.200"/><path d="M7 2a4 4 0 0 0 8 0" stroke="#0c0" stroke-width="1.200"/><path d="M2 13l9-9" stroke="#000"/></g></svg>
<svg class="ic" style="left:1256px;top:189px" width="22" height="16" viewBox="0 0 22 16" ><text x="2" y="13.500" font-family="Liberation Sans, Arial, sans-serif" font-weight="bold" font-size="15px" fill="#000080" textLength="16" lengthAdjust="spacingAndGlyphs">DL</text></svg>
<svg class="ic" style="left:1256px;top:212px" width="22" height="20" viewBox="0 0 22 20" ><g stroke="#000" stroke-width="1.200" fill="none"><path d="M2 8l7-7M5 18l14-16M14 18l4-4"/><path d="M2 8l8 10" stroke="#606060"/></g></svg>
<svg class="ic" style="left:1256px;top:238px" width="22" height="17" viewBox="0 0 22 17" ><text x="1" y="14" font-family="Liberation Serif, serif" font-size="17px" fill="#000">I</text><g fill="none"><path d="M6.500 6l12 .5" stroke="#f00"/><path d="M6.500 6l11 4.500" stroke="#00f"/><path d="M6.500 6l12 7" stroke="#080"/><path d="M6.500 6l9 9" stroke="#000" stroke-width="1.300"/></g></svg>
<svg class="ic" style="left:1256px;top:261px" width="22" height="18" viewBox="0 0 22 18" ><g shape-rendering="crispEdges" fill="#000"><rect x="2" y="2" width="16" height="1"/><rect x="2" y="5" width="16" height="1"/><rect x="2" y="9" width="16" height="1"/><rect x="2" y="15" width="16" height="1"/></g></svg>
<svg class="ic" style="left:1256px;top:286px" width="22" height="16" viewBox="0 0 22 16" ><g shape-rendering="crispEdges" fill="#00f"><rect x="2" y="1" width="1" height="14"/><rect x="4" y="1" width="1" height="14"/><rect x="8" y="1" width="1" height="14"/><rect x="12" y="1" width="1" height="14"/><rect x="16" y="1" width="1" height="14"/></g></svg>
<svg class="ic" style="left:1256px;top:310px" width="22" height="16" viewBox="0 0 22 16" ><g shape-rendering="crispEdges" fill="#f00"><rect x="2" y="1" width="1" height="14"/><rect x="7" y="1" width="1" height="14"/><rect x="12" y="1" width="1" height="14"/><rect x="17" y="1" width="1" height="14"/></g></svg>
<svg class="ic" style="left:1256px;top:332px" width="22" height="20" viewBox="0 0 22 20" ><g shape-rendering="crispEdges"><g fill="#00f"><rect x="1" y="13" width="1" height="6"/><rect x="4" y="10" width="1" height="6"/><rect x="7" y="7" width="1" height="6"/><rect x="10" y="4" width="1" height="6"/><rect x="2" y="16" width="1" height="1"/><rect x="5" y="13" width="1" height="1"/><rect x="8" y="10" width="1" height="1"/></g><rect x="12.500" y="1.500" width="7" height="3" fill="#fff" stroke="#f00"/><rect x="15.500" y="7.500" width="4" height="3" fill="#fff" stroke="#f00"/></g></svg>
<svg class="ic" style="left:1256px;top:356px" width="22" height="18" viewBox="0 0 22 18" ><g stroke="#000" stroke-width="1.200"><path d="M5 9l7-8M4 16l13-14M13 16l6-7"/></g></svg>
<svg class="ic" style="left:1256px;top:381px" width="22" height="16" viewBox="0 0 22 16" ><path d="M3 14.500l8-12.500" stroke="#00f" stroke-width="1.300"/><path d="M3 14.500h9" stroke="#f00" stroke-dasharray="1 1"/><path d="M11 3l-1 11" stroke="#f00" stroke-dasharray="1 1"/><path d="M13 14.500l4-10" stroke="#000" stroke-width="1.300"/></svg>
<svg class="ic" style="left:1256px;top:405px" width="22" height="17" viewBox="0 0 22 17" ><g shape-rendering="crispEdges"><rect x="1" y="2" width="19" height="1" fill="#00f"/><rect x="1" y="6" width="19" height="1" fill="#f00"/><rect x="1" y="10" width="19" height="1" fill="#00f"/><rect x="1" y="14" width="19" height="1" fill="#f00"/></g><text x="3.500" y="15" font-family="Liberation Sans, Arial, sans-serif" font-weight="bold" font-size="15px" fill="#008000">G</text></svg>
<svg class="ic" style="left:1256px;top:430px" width="22" height="17" viewBox="0 0 22 17" ><g stroke="#000" stroke-width="1.100"><path d="M3 15l4-13M3 15l8-13M3 15l14-13M3 15l15-7M3 15l15-3"/></g><path d="M1 16.500l5-5 2 2.500z" fill="#000"/></svg>
<svg class="ic" style="left:1256px;top:454px" width="22" height="16" viewBox="0 0 22 16" ><g font-family="Liberation Mono, monospace" font-size="14px"><text x="1" y="13" fill="#800080">G</text><text x="9.500" y="13" fill="#008000">9</text></g></svg>
<svg class="ic" style="left:1256px;top:478px" width="22" height="16" viewBox="0 0 22 16" ><g font-family="Liberation Mono, monospace" font-size="14px" fill="#800080"><text x="1" y="13">G</text><text x="9.500" y="13">S</text></g></svg>
<svg class="ic" style="left:1256px;top:502px" width="22" height="16" viewBox="0 0 22 16" ><text x="2" y="13" font-family="Liberation Sans, Arial, sans-serif" font-weight="bold" font-size="14px" fill="#000" textLength="17" lengthAdjust="spacingAndGlyphs">LS</text></svg>
<svg class="ic" style="left:1256px;top:526px" width="22" height="16" viewBox="0 0 22 16" ><text x="4" y="13" font-family="Liberation Sans, Arial, sans-serif" font-weight="bold" font-size="14px" fill="#000">Bi</text></svg>
<svg class="ic" style="left:1255px;top:549px" width="4" height="7" viewBox="0 0 4 7" ><path d="M3.600 .5v6l-3.400-3z" fill="#000"/></svg>
<svg class="ic" style="left:11px;top:25px" width="16" height="17" viewBox="0 0 16 17" ><rect x="0.500" y="1" width="14" height="14" fill="#c0c0c0"/><path d="M0.500 16h15v-15.500" stroke="#303030" fill="none"/><path d="M0.500 16v-15.500h15" stroke="#e8e8e8" fill="none"/><path d="M2 3.500l2.500 4 2.500 3.500 2.500.5 2.500-2 2-2.500" stroke="#e00000" stroke-width="1.300" fill="none" stroke-dasharray="1.500 1"/><rect x="12" y="2" width="1" height="1" fill="#00f"/><rect x="13" y="5" width="1" height="1" fill="#00f"/></svg>
<div class="abs" style="left:4px;top:24px;width:1px;height:19px;background:#fff;"></div>
<div class="abs" style="left:6px;top:24px;width:1px;height:19px;background:#a0a0a0;"></div>
<svg class="ic" style="left:1232px;top:28px" width="44" height="10" viewBox="0 0 44 10" ><g shape-rendering="crispEdges" fill="#000"><rect x="0" y="7" width="6" height="2"/><rect x="17" y="0" width="7" height="2"/><rect x="17" y="0" width="1" height="6"/><rect x="23" y="0" width="1" height="6"/><rect x="15" y="3" width="7" height="2"/><rect x="15" y="3" width="1" height="7"/><rect x="21" y="3" width="1" height="7"/><rect x="15" y="9" width="7" height="1"/><rect x="16" y="5" width="5" height="4" fill="#f0f0f0"/></g><path d="M35 1l7 7M42 1l-7 7" stroke="#000" stroke-width="1.800"/></svg>
<svg class="ic" style="left:1183px;top:0px" width="95" height="17" viewBox="0 0 95 17" ><defs><linearGradient id="gb" x1="0" y1="0" x2="0" y2="1"><stop offset="0" stop-color="#9aa5b3"/><stop offset=".45" stop-color="#5f6c7e"/><stop offset=".5" stop-color="#1c2b42"/><stop offset="1" stop-color="#2c3d57"/></linearGradient><linearGradient id="gr" x1="0" y1="0" x2="0" y2="1"><stop offset="0" stop-color="#e0a89c"/><stop offset=".45" stop-color="#cf7a68"/><stop offset=".5" stop-color="#b22c12"/><stop offset="1" stop-color="#c85a3c"/></linearGradient></defs><path d="M.5 0v11q0 4.500 4.500 4.500h84q4.500 0 4.500-4.500v-11z" fill="url(#gb)" stroke="#c8d0da" stroke-width="1"/><path d="M51.500 0v15h37.500q4.500 0 4.500-4.500v-10.500z" fill="url(#gr)" stroke="#e8c8c0" stroke-width="1"/><path d="M26 0v15.500M51 0v15.500" stroke="#c8d0da"/><rect x="9" y="8" width="10" height="3" fill="#fff" stroke="#555" stroke-width=".5"/><g fill="none" stroke="#fff" stroke-width="1.600"><rect x="36" y="2.500" width="7" height="6"/><rect x="33" y="5.500" width="7" height="6" fill="#5f6c7e"/></g><path d="M67 3.500l8 8M75 3.500l-8 8" stroke="#fff" stroke-width="2.600"/></svg>
<svg class="ic" style="left:0px;top:1px" width="21" height="17" viewBox="0 0 21 17" ><g shape-rendering="crispEdges"><rect x="0" y="2" width="8" height="7" fill="#00f"/><rect x="1" y="3" width="2" height="1" fill="#fff"/><rect x="4" y="3" width="3" height="1" fill="#fff"/><rect x="1" y="5" width="6" height="1" fill="#fff"/><rect x="5" y="4" width="1" height="4" fill="#fff"/><rect x="1" y="7" width="3" height="1" fill="#fff"/><rect x="14" y="1" width="2" height="2" fill="#0ff"/><rect x="2" y="11" width="2" height="2" fill="#f0f"/><rect x="8" y="14" width="1" height="2" fill="#0f0"/><rect x="13" y="12" width="1" height="1" fill="#f00"/></g><text x="7" y="14" font-family="Liberation Serif, serif" font-weight="bold" font-size="15px" fill="#000">4</text></svg>
<div id="task" class="abs"></div>
<svg class="ic" style="left:9px;top:765px" width="43" height="37" viewBox="0 0 43 37" ><defs><radialGradient id="orb" cx=".5" cy=".35" r=".65"><stop offset="0" stop-color="#7fb4e6"/><stop offset=".55" stop-color="#2f6eb4"/><stop offset=".85" stop-color="#0f3c78"/><stop offset="1" stop-color="#0a2240"/></radialGradient><radialGradient id="orbg" cx=".5" cy="1" r=".6"><stop offset="0" stop-color="#35c8f0" stop-opacity=".9"/><stop offset="1" stop-color="#35c8f0" stop-opacity="0"/></radialGradient></defs><circle cx="21.500" cy="21.500" r="20.500" fill="#10243c"/><circle cx="21.500" cy="21.500" r="19" fill="url(#orb)"/><circle cx="21.500" cy="21.500" r="19" fill="url(#orbg)"/><path d="M4 14a19 19 0 0 1 35 0q-17-6-35 0z" fill="#fff" fill-opacity=".28"/><path d="M13 12q4-2.500 8-.5l-2 8q-4-2-8 .5z" fill="#f2642a"/><path d="M22.500 12q4 2 8.500-.5l-2 8q-4 2.500-8.500.5z" fill="#8cc63f"/><path d="M10.500 21.500q4-2.500 8-.5l-2 8q-4-2-8 .5z" fill="#3a9be0"/><path d="M20 22q4 2 8.500-.5l-2 8q-4 2.500-8.500.5z" fill="#fbc02d"/></svg>
<svg class="ic" style="left:65px;top:777px" width="17" height="17" viewBox="0 0 17 17" ><rect x="0.500" y="1.500" width="15" height="12" fill="#2a62c8" stroke="#c8d4e8"/><rect x="1" y="10" width="14" height="3" fill="#101828"/><rect x="1" y="2" width="14" height="4" fill="#5a8ae0"/><circle cx="3.500" cy="11.500" r="1.500" fill="#e04020"/></svg>
<svg class="ic" style="left:88px;top:777px" width="17" height="17" viewBox="0 0 17 17" ><rect x="0.500" y="1.500" width="15" height="12" fill="#1a3c98" stroke="#c8d4e8"/><rect x="2" y="3" width="7" height="4" fill="#dfe8f4"/><rect x="4" y="6" width="7" height="4" fill="#eef3fa"/><rect x="7" y="9" width="7" height="3" fill="#fff"/><rect x="2" y="3" width="7" height="1" fill="#2a8a7a"/><rect x="4" y="6" width="7" height="1" fill="#2a8a7a"/></svg>
<svg class="ic" style="left:111px;top:777px" width="17" height="17" viewBox="0 0 17 17" ><rect x="2" y="0.500" width="12" height="4" fill="#f0a030"/><rect x="0.500" y="3.500" width="15" height="10" fill="#e8eef6" stroke="#9ab0d0"/><rect x="3" y="8" width="10" height="7" fill="#3a8ad8"/><rect x="5" y="10" width="6" height="5" fill="#4ab070"/><rect x="11" y="4.500" width="3" height="2" fill="#e05030"/></svg>
<svg class="ic" style="left:134px;top:777px" width="17" height="17" viewBox="0 0 17 17" ><circle cx="8" cy="8.500" r="6" fill="none" stroke="#2a8ae6" stroke-width="3"/><path d="M3 9h10" stroke="#2a8ae6" stroke-width="2.500"/><path d="M8 8h8v3h-8z" fill="#3a3e44"/><path d="M1 13q-2-6 6-10q6-3 9-1" stroke="#f0c020" stroke-width="1.600" fill="none"/></svg>
<svg class="ic" style="left:157px;top:777px" width="17" height="17" viewBox="0 0 17 17" ><circle cx="8" cy="8.500" r="7" fill="#2a4aa8"/><path d="M1 8a7 7 0 0 0 14 2q-2 4-6 3q3-3 0-6q-3 1-4-1q2-4 6-4q-6-2-10 6z" fill="#f08020"/><path d="M3 3q1 2 3 2q-2 2-2 5z" fill="#f8c040"/></svg>
<svg class="ic" style="left:180px;top:777px" width="17" height="17" viewBox="0 0 17 17" ><rect x="0.500" y="0.500" width="15" height="15" rx="1.500" fill="#3a9ae8" stroke="#1a5ab8"/><rect x="2" y="2" width="12" height="12" fill="#7ac0a0"/><circle cx="8" cy="8" r="5.500" fill="#f08a1a"/><path d="M6 5l5 3-5 3z" fill="#fff"/></svg>
<svg class="ic" style="left:204px;top:777px" width="17" height="17" viewBox="0 0 17 17" ><path d="M2.500 2h12l-1 13h-12z" fill="#c8e4f0" stroke="#7aa0b8"/><path d="M4 5h9M4 7h9M4 9h9M3.500 11h9M3.500 13h9" stroke="#3a80b0" stroke-width="1"/><path d="M3 1v2M5 1v2M7 1v2M9 1v2M11 1v2M13 1v2" stroke="#888"/></svg>
<svg class="ic" style="left:227px;top:777px" width="17" height="17" viewBox="0 0 17 17" ><rect x="4" y="0.500" width="8" height="9" rx="2" fill="#f8f8f0" stroke="#222"/><rect x="5" y="3" width="6" height="5" fill="#f0e020"/><text x="5.500" y="8" font-family="Liberation Sans,sans-serif" font-weight="bold" font-size="6px" fill="#000">R</text><path d="M2 14h10M8 9v5" stroke="#000" stroke-width="1.500"/><path d="M12 11l3 4" stroke="#888" stroke-width="1.500"/></svg>
<svg class="ic" style="left:250px;top:777px" width="17" height="17" viewBox="0 0 17 17" ><rect x="3.500" y="1.500" width="12" height="10" fill="#1a3ce0" stroke="#a0a8b8"/><rect x="4" y="2" width="11" height="4" fill="#3a6af0"/><rect x="6" y="12" width="7" height="1.500" fill="#a0a8b8"/><rect x="4" y="14" width="11" height="1.500" fill="#c0c8d0"/><rect x="0.500" y="6" width="2" height="9" fill="#888"/></svg>
<svg class="ic" style="left:273px;top:777px" width="17" height="17" viewBox="0 0 17 17" ><path d="M1 1.500h5l1 1.500v12h-6z" fill="#e8c860"/><path d="M7 3h7.500v12h-7.500z" fill="#f4dc88"/><path d="M7 3l3-2v12l-3 2z" fill="#f0d070"/><rect x="11" y="8" width="1.500" height="4" fill="#5a9ae0"/></svg>
<svg class="ic" style="left:296px;top:777px" width="17" height="17" viewBox="0 0 17 17" ><path d="M1 2h14l-2 13h-10z" fill="#b8d0e4" fill-opacity=".9" stroke="#7a98b4"/><path d="M1 2h14l-.5 2.500h-13z" fill="#d8e6f2"/><circle cx="8" cy="9" r="3" fill="none" stroke="#3a7ae0" stroke-width="1.500"/><path d="M7 8l3 1-3 1.500z" fill="#3a7ae0"/></svg>
<svg class="ic" style="left:319px;top:777px" width="17" height="17" viewBox="0 0 17 17" ><rect x="2" y="2" width="12" height="12" fill="#222" transform="rotate(20 8 8)"/><path d="M8 8l0-5a5 5 0 0 1 4.300 2.500z" fill="#f0e020"/><path d="M8 8l4.300-2.500a5 5 0 0 1 0 5z" fill="#30c030"/><path d="M8 8l4.300 2.500a5 5 0 0 1-4.300 2.500z" fill="#20c0e0"/><path d="M8 8l0 5a5 5 0 0 1-4.300-2.500z" fill="#3040e0"/><path d="M8 8l-4.300 2.500a5 5 0 0 1 0-5z" fill="#e020e0"/><path d="M8 8l-4.300-2.500a5 5 0 0 1 4.300-2.500z" fill="#e03020"/></svg>
<svg class="ic" style="left:341px;top:777px" width="17" height="17" viewBox="0 0 17 17" ><circle cx="8.500" cy="8.500" r="8" fill="#e8e8e8"/><circle cx="8.500" cy="8.500" r="6.300" fill="#d82020"/><path d="M5 12q0-3 2-4q0 2 1.500 1q-1-3 1-5q0 3 2 4.500q1 2-.5 3.500z" fill="#f8b0a0"/></svg>
<svg class="ic" style="left:364px;top:777px" width="17" height="17" viewBox="0 0 17 17" ><path d="M8 0l1.500 5 6.500-1-5 5-1 3.500 2 1.500-3.500.5-1.500 2.500-.5-3-3.500-.5 3-1.500-.5-3-5.500-4.500 6.500 1.500z" fill="#1020e8"/></svg>
<svg class="ic" style="left:387px;top:776px" width="19" height="19" viewBox="0 0 19 19" ><text x="0" y="10" font-family="Liberation Serif,serif" font-weight="bold" font-size="12px" fill="#e01010">MS</text><ellipse cx="9" cy="12.500" rx="7" ry="4" fill="#111"/><g fill="#20c0c0"><rect x="4" y="11" width="1" height="1"/><rect x="7" y="13" width="1" height="1"/><rect x="10" y="11" width="1" height="1"/><rect x="13" y="13" width="1" height="1"/></g><g fill="#e02020"><rect x="6" y="12" width="1" height="1"/><rect x="12" y="12" width="1" height="1"/></g></svg>
<div class="tbtn" style="left:432px;width:158px"></div>
<div class="tbtn act" style="left:592px;width:158px"></div>
<div class="tbtn" style="left:752px;width:158px"></div>
<svg class="ic" style="left:441px;top:777px" width="17" height="17" viewBox="0 0 17 17" ><circle cx="8" cy="8.500" r="7" fill="#2a4aa8"/><path d="M1 8a7 7 0 0 0 14 2q-2 4-6 3q3-3 0-6q-3 1-4-1q2-4 6-4q-6-2-10 6z" fill="#f08020"/><path d="M3 3q1 2 3 2q-2 2-2 5z" fill="#f8c040"/></svg>
<svg class="ic" style="left:601px;top:777px" width="17" height="17" viewBox="0 0 17 17" ><g shape-rendering="crispEdges"><rect x="0" y="1" width="9" height="8" fill="#1010f0"/><rect x="1" y="2" width="3" height="1" fill="#fff"/><rect x="5" y="2" width="3" height="1" fill="#fff"/><rect x="1" y="4" width="7" height="1" fill="#fff"/><rect x="6" y="3" width="1" height="5" fill="#fff"/><rect x="1" y="7" width="4" height="1" fill="#fff"/><rect x="12" y="1" width="2" height="2" fill="#0ff"/><rect x="2" y="12" width="2" height="2" fill="#f0f"/><rect x="8" y="14" width="1" height="1" fill="#0f0"/><rect x="12" y="9" width="1" height="2" fill="#fff"/><rect x="12" y="12" width="1" height="1" fill="#fff"/></g></svg>
<svg class="ic" style="left:761px;top:777px" width="17" height="17" viewBox="0 0 17 17" ><rect width="16" height="16" fill="#000"/><ellipse cx="8" cy="8" rx="6" ry="4.500" fill="#9ac4f0"/><ellipse cx="7" cy="7" rx="3.500" ry="2" fill="#e0f0ff"/><path d="M0 14l6-6 3 2 7-7" stroke="#1020f0" stroke-width="1.300" fill="none"/></svg>
<div class="tt" style="left:461px">Forum inwestorów ...</div>
<div class="tt" style="left:622px;letter-spacing:-0.1px">Fibonacci/Galactic ...</div>
<div class="tt" style="left:784px">Notowania 2</div>
<div class="tt" style="left:1092px;top:776px;font-size:11.5px;letter-spacing:-0.4px;color:#e8e8e8">PL</div>
<svg class="ic" style="left:1113px;top:775px" width="17" height="17" viewBox="0 0 17 17" ><rect x="0.500" y="6.500" width="15" height="9" rx="1.500" fill="#3a3e44" stroke="#d8d8d8"/><path d="M3 9h10M3 11h10M4 13h8" stroke="#d8d8d8" stroke-dasharray="1 1"/><path d="M5 6q1-3 4-3t5-2" stroke="#d8d8d8" fill="none"/></svg>
<svg class="ic" style="left:1139px;top:779px" width="8" height="10" viewBox="0 0 8 10" ><path d="M6.500 1l-5 4 5 4" stroke="#fff" stroke-width="1.800" fill="none"/></svg>
<svg class="ic" style="left:1153px;top:775px" width="17" height="17" viewBox="0 0 17 17" ><rect width="16" height="16" fill="#000"/><ellipse cx="8" cy="8" rx="6" ry="4.500" fill="#9ac4f0"/><ellipse cx="7" cy="7" rx="3.500" ry="2" fill="#e0f0ff"/><path d="M0 14l6-6 3 2 7-7" stroke="#1020f0" stroke-width="1.300" fill="none"/></svg>
<svg class="ic" style="left:1182px;top:775px" width="16" height="17" viewBox="0 0 16 17" ><rect x="6.500" y="2.500" width="8" height="13" rx="1" fill="#c8e8c0" stroke="#f0f0f0"/><rect x="8" y="1" width="5" height="2" fill="#e8e8e8"/><path d="M2 1v4M5 1v4" stroke="#e8c040" stroke-width="1.300"/><path d="M1 5h5v3l-1 2h-3l-1-2z" fill="#f8f8f8"/><path d="M3.500 10v5" stroke="#f0f0f0" stroke-width="1.500"/></svg>
<svg class="ic" style="left:1200px;top:775px" width="16" height="17" viewBox="0 0 16 17" ><rect x="4.500" y="0.500" width="10" height="8" fill="#3a7ae0" stroke="#e0e8f0"/><rect x="0.500" y="4.500" width="10" height="8" fill="#2a5ac8" stroke="#e0e8f0"/><rect x="3" y="13" width="5" height="1.500" fill="#d0d8e0"/><circle cx="11" cy="12" r="4" fill="#2a8ae0"/><path d="M8 11q2-3 4-1t2 3q-2 2-4 1z" fill="#40c040"/></svg>
<svg class="ic" style="left:1218px;top:775px" width="16" height="17" viewBox="0 0 16 17" ><path d="M1 6h3l4-4v13l-4-4h-3z" fill="#f0f0f0"/><path d="M10 6.500q1.500 2 0 4M12 4.500q3 4 0 8" stroke="#30c040" stroke-width="1.300" fill="none"/></svg>
<div class="tt" style="left:1240px;top:778px;font-size:11.5px;letter-spacing:-0.35px;color:#fff">21:46</div>
</body></html>
